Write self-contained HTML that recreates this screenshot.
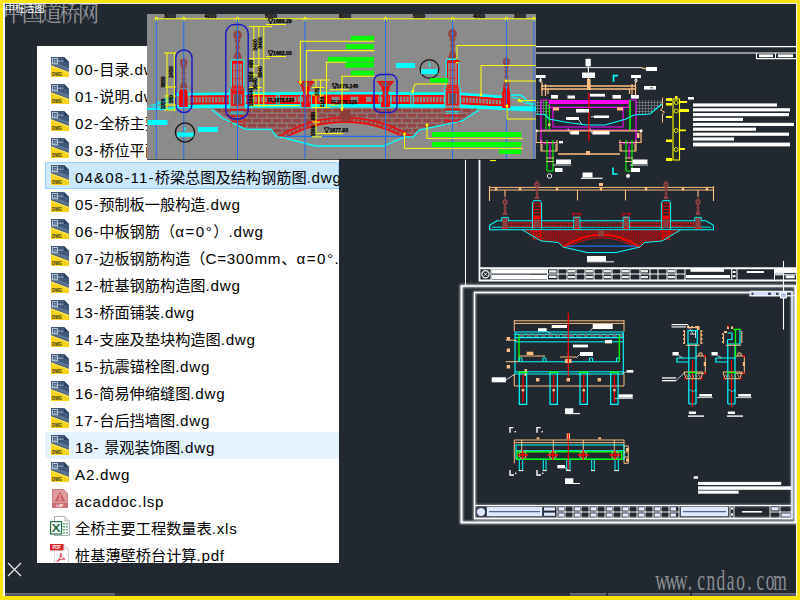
<!DOCTYPE html>
<html lang="zh-CN">
<head>
<meta charset="utf-8">
<title>桥梁总图 - 文件列表</title>
<style>
html,body{margin:0;padding:0;}
body{width:800px;height:600px;overflow:hidden;background:#212830;position:relative;
  font-family:"Liberation Sans","Noto Sans CJK SC",sans-serif;}
.abs{position:absolute;}
#frame{left:0;top:0;width:800px;height:600px;box-sizing:border-box;pointer-events:none;z-index:50;
  border-left:3px solid #f6e30f;border-top:3px solid #f6e30f;border-right:3px solid #f6e30f;border-bottom:4px solid #f6e30f;}
#frame2{left:3px;top:3px;width:794px;height:593px;box-sizing:border-box;pointer-events:none;z-index:49;border-left:2px solid #f4f4f4;border-top:1px solid #e8e8e8;border-right:1px solid #f4f4f4;}
#wm1{left:3px;top:-4px;font-family:"Liberation Serif","Noto Serif CJK SC",serif;font-size:21.5px;color:#93969a;letter-spacing:-2.8px;white-space:nowrap;z-index:5;}
#wm1b{left:5px;top:2.5px;font-size:10px;line-height:11px;color:#fff;white-space:nowrap;z-index:6;letter-spacing:-0.2px;}
#wm2{left:655px;top:565px;width:140px;height:30px;z-index:5;}
#files{left:37px;top:46px;width:302px;height:517px;background:#fff;overflow:hidden;z-index:10;}
.row{position:absolute;left:8px;width:294px;height:27px;box-sizing:border-box;white-space:nowrap;}
.row.sel{background:#cce8ff;border:1px solid #99d1ff;}
.row.hov{background:#e5f3ff;}
.row .ic{position:absolute;left:6px;top:3px;width:18px;height:20px;}
.row.sel .ic{left:5px;top:2px;}
.row .t{position:absolute;left:30px;top:0;height:27px;line-height:31px;font-size:15.2px;color:#000;}
.row .t .l{letter-spacing:0.75px;}
.row.sel .t{left:29px;top:-1px;}
#popup{left:147px;top:14px;width:389px;height:144.6px;background:#8b8b8b;z-index:20;overflow:hidden;box-shadow:0 0.8px 0 #15181c;}
#rt{left:440px;top:40px;width:360px;height:250px;z-index:3;}
#rb{left:440px;top:280px;width:360px;height:260px;z-index:4;overflow:visible;}
#xic{left:7px;top:562px;width:15px;height:15px;z-index:6;}
#strip{left:3px;top:592.8px;width:794px;height:3.6px;background:#2d323a;z-index:6;}
#strip i{position:absolute;top:0;height:100%;background:linear-gradient(#6c7076,#4a4f56);}
</style>
</head>
<body>
<div id="frame" class="abs"></div>
<div id="frame2" class="abs"></div>
<div id="wm1" class="abs">中国道桥网</div>
<div id="wm1b" class="abs">中桩活图</div>

<!-- FILES -->
<div id="files" class="abs">
<div class="row" style="top:8px"><svg class="ic" viewBox="0 0 18 20"><path d="M0 0H13L18 5V20H0Z" fill="#40597a"/><path d="M0 4L18 11V14L0 7Z" fill="#5b7595"/><path d="M13 0L18 5H13Z" fill="#2c4262"/><path d="M0 8.2L18 15V20H0Z" fill="#f6d31a"/><path d="M0 8.2L18 15V16.4L0 9.6Z" fill="#fbe25a"/><rect x="1.4" y="1.6" width="5.2" height="5.2" fill="none" stroke="#d5deea" stroke-width="0.8"/><rect x="3.2" y="3.4" width="2" height="2" fill="none" stroke="#aebcd0" stroke-width="0.6"/><path d="M6.6 4.2H12.4" stroke="#aebcd0" stroke-width="0.8"/><text x="1" y="18.6" font-family="Liberation Sans, sans-serif" font-weight="bold" font-size="5.6" fill="#33331a" textLength="10" lengthAdjust="spacingAndGlyphs">DWG</text></svg><span class="t"><span class="l">00-</span>目录<span class="l">.dwg</span></span></div>
<div class="row" style="top:35px"><svg class="ic" viewBox="0 0 18 20"><path d="M0 0H13L18 5V20H0Z" fill="#40597a"/><path d="M0 4L18 11V14L0 7Z" fill="#5b7595"/><path d="M13 0L18 5H13Z" fill="#2c4262"/><path d="M0 8.2L18 15V20H0Z" fill="#f6d31a"/><path d="M0 8.2L18 15V16.4L0 9.6Z" fill="#fbe25a"/><rect x="1.4" y="1.6" width="5.2" height="5.2" fill="none" stroke="#d5deea" stroke-width="0.8"/><rect x="3.2" y="3.4" width="2" height="2" fill="none" stroke="#aebcd0" stroke-width="0.6"/><path d="M6.6 4.2H12.4" stroke="#aebcd0" stroke-width="0.8"/><text x="1" y="18.6" font-family="Liberation Sans, sans-serif" font-weight="bold" font-size="5.6" fill="#33331a" textLength="10" lengthAdjust="spacingAndGlyphs">DWG</text></svg><span class="t"><span class="l">01-</span>说明<span class="l">.dwg</span></span></div>
<div class="row" style="top:62px"><svg class="ic" viewBox="0 0 18 20"><path d="M0 0H13L18 5V20H0Z" fill="#40597a"/><path d="M0 4L18 11V14L0 7Z" fill="#5b7595"/><path d="M13 0L18 5H13Z" fill="#2c4262"/><path d="M0 8.2L18 15V20H0Z" fill="#f6d31a"/><path d="M0 8.2L18 15V16.4L0 9.6Z" fill="#fbe25a"/><rect x="1.4" y="1.6" width="5.2" height="5.2" fill="none" stroke="#d5deea" stroke-width="0.8"/><rect x="3.2" y="3.4" width="2" height="2" fill="none" stroke="#aebcd0" stroke-width="0.6"/><path d="M6.6 4.2H12.4" stroke="#aebcd0" stroke-width="0.8"/><text x="1" y="18.6" font-family="Liberation Sans, sans-serif" font-weight="bold" font-size="5.6" fill="#33331a" textLength="10" lengthAdjust="spacingAndGlyphs">DWG</text></svg><span class="t"><span class="l">02-</span>全桥主要工程数量表<span class="l">.dwg</span></span></div>
<div class="row" style="top:89px"><svg class="ic" viewBox="0 0 18 20"><path d="M0 0H13L18 5V20H0Z" fill="#40597a"/><path d="M0 4L18 11V14L0 7Z" fill="#5b7595"/><path d="M13 0L18 5H13Z" fill="#2c4262"/><path d="M0 8.2L18 15V20H0Z" fill="#f6d31a"/><path d="M0 8.2L18 15V16.4L0 9.6Z" fill="#fbe25a"/><rect x="1.4" y="1.6" width="5.2" height="5.2" fill="none" stroke="#d5deea" stroke-width="0.8"/><rect x="3.2" y="3.4" width="2" height="2" fill="none" stroke="#aebcd0" stroke-width="0.6"/><path d="M6.6 4.2H12.4" stroke="#aebcd0" stroke-width="0.8"/><text x="1" y="18.6" font-family="Liberation Sans, sans-serif" font-weight="bold" font-size="5.6" fill="#33331a" textLength="10" lengthAdjust="spacingAndGlyphs">DWG</text></svg><span class="t"><span class="l">03-</span>桥位平面图<span class="l">.dwg</span></span></div>
<div class="row sel" style="top:116px"><svg class="ic" viewBox="0 0 18 20"><path d="M0 0H13L18 5V20H0Z" fill="#40597a"/><path d="M0 4L18 11V14L0 7Z" fill="#5b7595"/><path d="M13 0L18 5H13Z" fill="#2c4262"/><path d="M0 8.2L18 15V20H0Z" fill="#f6d31a"/><path d="M0 8.2L18 15V16.4L0 9.6Z" fill="#fbe25a"/><rect x="1.4" y="1.6" width="5.2" height="5.2" fill="none" stroke="#d5deea" stroke-width="0.8"/><rect x="3.2" y="3.4" width="2" height="2" fill="none" stroke="#aebcd0" stroke-width="0.6"/><path d="M6.6 4.2H12.4" stroke="#aebcd0" stroke-width="0.8"/><text x="1" y="18.6" font-family="Liberation Sans, sans-serif" font-weight="bold" font-size="5.6" fill="#33331a" textLength="10" lengthAdjust="spacingAndGlyphs">DWG</text></svg><span class="t"><span class="l" style="letter-spacing:1.1px">04&amp;08-11-</span>桥梁总图及结构钢筋图<span class="l">.dwg</span></span></div>
<div class="row" style="top:143px"><svg class="ic" viewBox="0 0 18 20"><path d="M0 0H13L18 5V20H0Z" fill="#40597a"/><path d="M0 4L18 11V14L0 7Z" fill="#5b7595"/><path d="M13 0L18 5H13Z" fill="#2c4262"/><path d="M0 8.2L18 15V20H0Z" fill="#f6d31a"/><path d="M0 8.2L18 15V16.4L0 9.6Z" fill="#fbe25a"/><rect x="1.4" y="1.6" width="5.2" height="5.2" fill="none" stroke="#d5deea" stroke-width="0.8"/><rect x="3.2" y="3.4" width="2" height="2" fill="none" stroke="#aebcd0" stroke-width="0.6"/><path d="M6.6 4.2H12.4" stroke="#aebcd0" stroke-width="0.8"/><text x="1" y="18.6" font-family="Liberation Sans, sans-serif" font-weight="bold" font-size="5.6" fill="#33331a" textLength="10" lengthAdjust="spacingAndGlyphs">DWG</text></svg><span class="t"><span class="l">05-</span>预制板一般构造<span class="l">.dwg</span></span></div>
<div class="row" style="top:170px"><svg class="ic" viewBox="0 0 18 20"><path d="M0 0H13L18 5V20H0Z" fill="#40597a"/><path d="M0 4L18 11V14L0 7Z" fill="#5b7595"/><path d="M13 0L18 5H13Z" fill="#2c4262"/><path d="M0 8.2L18 15V20H0Z" fill="#f6d31a"/><path d="M0 8.2L18 15V16.4L0 9.6Z" fill="#fbe25a"/><rect x="1.4" y="1.6" width="5.2" height="5.2" fill="none" stroke="#d5deea" stroke-width="0.8"/><rect x="3.2" y="3.4" width="2" height="2" fill="none" stroke="#aebcd0" stroke-width="0.6"/><path d="M6.6 4.2H12.4" stroke="#aebcd0" stroke-width="0.8"/><text x="1" y="18.6" font-family="Liberation Sans, sans-serif" font-weight="bold" font-size="5.6" fill="#33331a" textLength="10" lengthAdjust="spacingAndGlyphs">DWG</text></svg><span class="t"><span class="l">06-</span>中板钢筋（<span class="l" style="letter-spacing:1.5px">α=0°</span>）<span class="l">.dwg</span></span></div>
<div class="row" style="top:197px"><svg class="ic" viewBox="0 0 18 20"><path d="M0 0H13L18 5V20H0Z" fill="#40597a"/><path d="M0 4L18 11V14L0 7Z" fill="#5b7595"/><path d="M13 0L18 5H13Z" fill="#2c4262"/><path d="M0 8.2L18 15V20H0Z" fill="#f6d31a"/><path d="M0 8.2L18 15V16.4L0 9.6Z" fill="#fbe25a"/><rect x="1.4" y="1.6" width="5.2" height="5.2" fill="none" stroke="#d5deea" stroke-width="0.8"/><rect x="3.2" y="3.4" width="2" height="2" fill="none" stroke="#aebcd0" stroke-width="0.6"/><path d="M6.6 4.2H12.4" stroke="#aebcd0" stroke-width="0.8"/><text x="1" y="18.6" font-family="Liberation Sans, sans-serif" font-weight="bold" font-size="5.6" fill="#33331a" textLength="10" lengthAdjust="spacingAndGlyphs">DWG</text></svg><span class="t"><span class="l">07-</span>边板钢筋构造（<span class="l">C=300mm</span>、<span class="l" style="letter-spacing:1.5px">α=0°...</span></span></div>
<div class="row" style="top:224px"><svg class="ic" viewBox="0 0 18 20"><path d="M0 0H13L18 5V20H0Z" fill="#40597a"/><path d="M0 4L18 11V14L0 7Z" fill="#5b7595"/><path d="M13 0L18 5H13Z" fill="#2c4262"/><path d="M0 8.2L18 15V20H0Z" fill="#f6d31a"/><path d="M0 8.2L18 15V16.4L0 9.6Z" fill="#fbe25a"/><rect x="1.4" y="1.6" width="5.2" height="5.2" fill="none" stroke="#d5deea" stroke-width="0.8"/><rect x="3.2" y="3.4" width="2" height="2" fill="none" stroke="#aebcd0" stroke-width="0.6"/><path d="M6.6 4.2H12.4" stroke="#aebcd0" stroke-width="0.8"/><text x="1" y="18.6" font-family="Liberation Sans, sans-serif" font-weight="bold" font-size="5.6" fill="#33331a" textLength="10" lengthAdjust="spacingAndGlyphs">DWG</text></svg><span class="t"><span class="l">12-</span>桩基钢筋构造图<span class="l">.dwg</span></span></div>
<div class="row" style="top:251px"><svg class="ic" viewBox="0 0 18 20"><path d="M0 0H13L18 5V20H0Z" fill="#40597a"/><path d="M0 4L18 11V14L0 7Z" fill="#5b7595"/><path d="M13 0L18 5H13Z" fill="#2c4262"/><path d="M0 8.2L18 15V20H0Z" fill="#f6d31a"/><path d="M0 8.2L18 15V16.4L0 9.6Z" fill="#fbe25a"/><rect x="1.4" y="1.6" width="5.2" height="5.2" fill="none" stroke="#d5deea" stroke-width="0.8"/><rect x="3.2" y="3.4" width="2" height="2" fill="none" stroke="#aebcd0" stroke-width="0.6"/><path d="M6.6 4.2H12.4" stroke="#aebcd0" stroke-width="0.8"/><text x="1" y="18.6" font-family="Liberation Sans, sans-serif" font-weight="bold" font-size="5.6" fill="#33331a" textLength="10" lengthAdjust="spacingAndGlyphs">DWG</text></svg><span class="t"><span class="l">13-</span>桥面铺装<span class="l">.dwg</span></span></div>
<div class="row" style="top:278px"><svg class="ic" viewBox="0 0 18 20"><path d="M0 0H13L18 5V20H0Z" fill="#40597a"/><path d="M0 4L18 11V14L0 7Z" fill="#5b7595"/><path d="M13 0L18 5H13Z" fill="#2c4262"/><path d="M0 8.2L18 15V20H0Z" fill="#f6d31a"/><path d="M0 8.2L18 15V16.4L0 9.6Z" fill="#fbe25a"/><rect x="1.4" y="1.6" width="5.2" height="5.2" fill="none" stroke="#d5deea" stroke-width="0.8"/><rect x="3.2" y="3.4" width="2" height="2" fill="none" stroke="#aebcd0" stroke-width="0.6"/><path d="M6.6 4.2H12.4" stroke="#aebcd0" stroke-width="0.8"/><text x="1" y="18.6" font-family="Liberation Sans, sans-serif" font-weight="bold" font-size="5.6" fill="#33331a" textLength="10" lengthAdjust="spacingAndGlyphs">DWG</text></svg><span class="t"><span class="l">14-</span>支座及垫块构造图<span class="l">.dwg</span></span></div>
<div class="row" style="top:305px"><svg class="ic" viewBox="0 0 18 20"><path d="M0 0H13L18 5V20H0Z" fill="#40597a"/><path d="M0 4L18 11V14L0 7Z" fill="#5b7595"/><path d="M13 0L18 5H13Z" fill="#2c4262"/><path d="M0 8.2L18 15V20H0Z" fill="#f6d31a"/><path d="M0 8.2L18 15V16.4L0 9.6Z" fill="#fbe25a"/><rect x="1.4" y="1.6" width="5.2" height="5.2" fill="none" stroke="#d5deea" stroke-width="0.8"/><rect x="3.2" y="3.4" width="2" height="2" fill="none" stroke="#aebcd0" stroke-width="0.6"/><path d="M6.6 4.2H12.4" stroke="#aebcd0" stroke-width="0.8"/><text x="1" y="18.6" font-family="Liberation Sans, sans-serif" font-weight="bold" font-size="5.6" fill="#33331a" textLength="10" lengthAdjust="spacingAndGlyphs">DWG</text></svg><span class="t"><span class="l">15-</span>抗震锚栓图<span class="l">.dwg</span></span></div>
<div class="row" style="top:332px"><svg class="ic" viewBox="0 0 18 20"><path d="M0 0H13L18 5V20H0Z" fill="#40597a"/><path d="M0 4L18 11V14L0 7Z" fill="#5b7595"/><path d="M13 0L18 5H13Z" fill="#2c4262"/><path d="M0 8.2L18 15V20H0Z" fill="#f6d31a"/><path d="M0 8.2L18 15V16.4L0 9.6Z" fill="#fbe25a"/><rect x="1.4" y="1.6" width="5.2" height="5.2" fill="none" stroke="#d5deea" stroke-width="0.8"/><rect x="3.2" y="3.4" width="2" height="2" fill="none" stroke="#aebcd0" stroke-width="0.6"/><path d="M6.6 4.2H12.4" stroke="#aebcd0" stroke-width="0.8"/><text x="1" y="18.6" font-family="Liberation Sans, sans-serif" font-weight="bold" font-size="5.6" fill="#33331a" textLength="10" lengthAdjust="spacingAndGlyphs">DWG</text></svg><span class="t"><span class="l">16-</span>简易伸缩缝图<span class="l">.dwg</span></span></div>
<div class="row" style="top:359px"><svg class="ic" viewBox="0 0 18 20"><path d="M0 0H13L18 5V20H0Z" fill="#40597a"/><path d="M0 4L18 11V14L0 7Z" fill="#5b7595"/><path d="M13 0L18 5H13Z" fill="#2c4262"/><path d="M0 8.2L18 15V20H0Z" fill="#f6d31a"/><path d="M0 8.2L18 15V16.4L0 9.6Z" fill="#fbe25a"/><rect x="1.4" y="1.6" width="5.2" height="5.2" fill="none" stroke="#d5deea" stroke-width="0.8"/><rect x="3.2" y="3.4" width="2" height="2" fill="none" stroke="#aebcd0" stroke-width="0.6"/><path d="M6.6 4.2H12.4" stroke="#aebcd0" stroke-width="0.8"/><text x="1" y="18.6" font-family="Liberation Sans, sans-serif" font-weight="bold" font-size="5.6" fill="#33331a" textLength="10" lengthAdjust="spacingAndGlyphs">DWG</text></svg><span class="t"><span class="l">17-</span>台后挡墙图<span class="l">.dwg</span></span></div>
<div class="row hov" style="top:386px"><svg class="ic" viewBox="0 0 18 20"><path d="M0 0H13L18 5V20H0Z" fill="#40597a"/><path d="M0 4L18 11V14L0 7Z" fill="#5b7595"/><path d="M13 0L18 5H13Z" fill="#2c4262"/><path d="M0 8.2L18 15V20H0Z" fill="#f6d31a"/><path d="M0 8.2L18 15V16.4L0 9.6Z" fill="#fbe25a"/><rect x="1.4" y="1.6" width="5.2" height="5.2" fill="none" stroke="#d5deea" stroke-width="0.8"/><rect x="3.2" y="3.4" width="2" height="2" fill="none" stroke="#aebcd0" stroke-width="0.6"/><path d="M6.6 4.2H12.4" stroke="#aebcd0" stroke-width="0.8"/><text x="1" y="18.6" font-family="Liberation Sans, sans-serif" font-weight="bold" font-size="5.6" fill="#33331a" textLength="10" lengthAdjust="spacingAndGlyphs">DWG</text></svg><span class="t"><span class="l">18- </span>景观装饰图<span class="l">.dwg</span></span></div>
<div class="row" style="top:413px"><svg class="ic" viewBox="0 0 18 20"><path d="M0 0H13L18 5V20H0Z" fill="#40597a"/><path d="M0 4L18 11V14L0 7Z" fill="#5b7595"/><path d="M13 0L18 5H13Z" fill="#2c4262"/><path d="M0 8.2L18 15V20H0Z" fill="#f6d31a"/><path d="M0 8.2L18 15V16.4L0 9.6Z" fill="#fbe25a"/><rect x="1.4" y="1.6" width="5.2" height="5.2" fill="none" stroke="#d5deea" stroke-width="0.8"/><rect x="3.2" y="3.4" width="2" height="2" fill="none" stroke="#aebcd0" stroke-width="0.6"/><path d="M6.6 4.2H12.4" stroke="#aebcd0" stroke-width="0.8"/><text x="1" y="18.6" font-family="Liberation Sans, sans-serif" font-weight="bold" font-size="5.6" fill="#33331a" textLength="10" lengthAdjust="spacingAndGlyphs">DWG</text></svg><span class="t"><span class="l">A2.dwg</span></span></div>
<div class="row" style="top:440px"><svg class="ic" viewBox="0 0 18 20" style="left:7px;top:3px"><path d="M0.5 0.5H11.5L15.5 4.5V18.5H0.5Z" fill="#dc9c9e" stroke="#cf7e82" stroke-width="1"/><path d="M0.5 14H15.5V18.5H0.5Z" fill="#cc6d72"/><path d="M8 2.6L2.8 12.6H13.2Z" fill="#c9595e"/><path d="M8 5V12.6" stroke="#ecc4c6" stroke-width="0.9"/><path d="M5 12.6L8 8L11 12.6" fill="none" stroke="#e2a6a9" stroke-width="0.7"/><text x="4.6" y="18" font-family="Liberation Sans, sans-serif" font-weight="bold" font-size="4.2" fill="#fff" textLength="6.8" lengthAdjust="spacingAndGlyphs">LSP</text></svg><span class="t"><span class="l">acaddoc.lsp</span></span></div>
<div class="row" style="top:467px"><svg class="ic" viewBox="0 0 20 20" style="left:5px;top:3px;width:20px;height:20px"><path d="M4.5 0.5H15L19.5 5V19.5H4.5Z" fill="#fff" stroke="#a9adb3" stroke-width="1"/><path d="M15 0.5V5H19.5" fill="#e8e8e8" stroke="#a9adb3" stroke-width="0.8"/><g fill="#6faf86"><rect x="13" y="7" width="2" height="1.6"/><rect x="16" y="7" width="2" height="1.6"/><rect x="13" y="10" width="2" height="1.6"/><rect x="16" y="10" width="2" height="1.6"/><rect x="13" y="13" width="2" height="1.6"/><rect x="16" y="13" width="2" height="1.6"/><rect x="13" y="16" width="2" height="1.6"/><rect x="16" y="16" width="2" height="1.6"/></g><rect x="0.6" y="5.6" width="11" height="12.4" fill="#fff" stroke="#1e7145" stroke-width="1.2"/><text x="1.6" y="15.6" font-family="Liberation Sans, sans-serif" font-weight="bold" font-size="10.5" fill="#1e7145" textLength="9" lengthAdjust="spacingAndGlyphs">X</text></svg><span class="t">全桥主要工程数量表<span class="l">.xls</span></span></div>
<div class="row" style="top:494px"><svg class="ic" viewBox="0 0 19 20" style="left:5px;top:4px;width:19px;height:20px"><path d="M4.5 0.5H14L18.5 5V19.5H4.5Z" fill="#fdfdfd" stroke="#cfd2d6" stroke-width="1"/><path d="M14 0.5V5H18.5" fill="#e9e9e9" stroke="#cfd2d6" stroke-width="0.8"/><rect x="0" y="0" width="13.5" height="6.4" fill="#d9212a"/><text x="2.4" y="5.2" font-family="Liberation Sans, sans-serif" font-weight="bold" font-size="5" fill="#fff" textLength="8.6" lengthAdjust="spacingAndGlyphs">PDF</text><path d="M10.6 9.2C11.5 9 11.5 10.6 11 12C11.8 13.6 13 14.3 14.3 14.5C15.2 14.6 15 15.6 13.8 15.3C12.2 15 10.6 15.3 9 16.1C8.2 17.4 7.4 17.9 7 17.4C6.7 16.8 7.8 16.1 8.8 15.8C9.8 14.3 10.4 13 10.7 11.9C10.3 10.8 10.1 9.4 10.6 9.2Z" fill="none" stroke="#d9212a" stroke-width="0.9"/></svg><span class="t">桩基薄壁桥台计算<span class="l">.pdf</span></span></div>
</div>

<!-- POPUP -->
<div id="popup" class="abs">
<svg class="abs" style="left:0;top:0" width="389" height="145" viewBox="147 14 389 145">
<line x1="156" y1="18.8" x2="534" y2="18.8" stroke="#ffff00" stroke-width="1"/>
<path d="M154.3 18.8L156.3 16.5L158.3 18.8L156.3 22Z" fill="#ffff00"/>
<path d="M181.8 18.8L183.8 16.5L185.8 18.8L183.8 22Z" fill="#ffff00"/>
<path d="M235.5 18.8L237.5 16.5L239.5 18.8L237.5 22Z" fill="#ffff00"/>
<path d="M303 18.8L305 16.5L307 18.8L305 22Z" fill="#ffff00"/>
<path d="M383.5 18.8L385.5 16.5L387.5 18.8L385.5 22Z" fill="#ffff00"/>
<path d="M450.5 18.8L452.5 16.5L454.5 18.8L452.5 22Z" fill="#ffff00"/>
<path d="M504.4 18.8L506.4 16.5L508.4 18.8L506.4 22Z" fill="#ffff00"/>
<path d="M532 18.8L534 16.5L536 18.8L534 22Z" fill="#ffff00"/>
<text x="170" y="17.6" font-family="Liberation Sans, sans-serif" font-weight="bold" font-size="5.4" text-anchor="middle" fill="#000" stroke="#000" stroke-width="0.25">3000</text>
<text x="210.5" y="17.6" font-family="Liberation Sans, sans-serif" font-weight="bold" font-size="5.4" text-anchor="middle" fill="#000" stroke="#000" stroke-width="0.25">4000</text>
<text x="271" y="17.6" font-family="Liberation Sans, sans-serif" font-weight="bold" font-size="5.4" text-anchor="middle" fill="#000" stroke="#000" stroke-width="0.25">5000</text>
<text x="345" y="17.6" font-family="Liberation Sans, sans-serif" font-weight="bold" font-size="5.4" text-anchor="middle" fill="#000" stroke="#000" stroke-width="0.25">8000</text>
<text x="419" y="17.6" font-family="Liberation Sans, sans-serif" font-weight="bold" font-size="5.4" text-anchor="middle" fill="#000" stroke="#000" stroke-width="0.25">5000</text>
<text x="479" y="17.6" font-family="Liberation Sans, sans-serif" font-weight="bold" font-size="5.4" text-anchor="middle" fill="#000" stroke="#000" stroke-width="0.25">4000</text>
<text x="520" y="17.6" font-family="Liberation Sans, sans-serif" font-weight="bold" font-size="5.4" text-anchor="middle" fill="#000" stroke="#000" stroke-width="0.25">3000</text>
<path d="M176.0 92.9L188.0 92.8L200.0 92.7L212.0 92.6L224.0 92.5L236.0 92.4L248.0 92.3L260.0 92.2L272.0 92.2L284.0 92.1L296.0 92.1L308.0 92.0L320.0 92.0L332.0 92.0L344.0 92.0L356.0 92.0L368.0 92.0L380.0 92.0L392.0 92.1L404.0 92.1L416.0 92.2L428.0 92.2L440.0 92.3L452.0 92.4L464.0 92.7L476.0 93.7L488.0 94.6L500.0 95.5L511.0 96.4L511.0 99.2L500.0 98.3L488.0 97.4L476.0 96.5L464.0 95.5L452.0 95.2L440.0 95.1L428.0 95.0L416.0 95.0L404.0 94.9L392.0 94.9L380.0 94.8L368.0 94.8L356.0 94.8L344.0 94.8L332.0 94.8L320.0 94.8L308.0 94.8L296.0 94.9L284.0 94.9L272.0 95.0L260.0 95.0L248.0 95.1L236.0 95.2L224.0 95.3L212.0 95.4L200.0 95.5L188.0 95.6L176.0 95.7Z" fill="#00ffff"/>
<path d="M190.0 95.6L202.0 95.4L214.0 95.3L226.0 95.2L238.0 95.2L250.0 95.1L262.0 95.0L274.0 95.0L286.0 94.9L298.0 94.9L310.0 94.8L322.0 94.8L334.0 94.8L346.0 94.8L358.0 94.8L370.0 94.8L382.0 94.8L394.0 94.9L406.0 94.9L418.0 95.0L430.0 95.0L442.0 95.1L454.0 95.2L466.0 95.7L478.0 96.6L490.0 97.5L502.0 98.5L510.0 99.1L510.0 100.8L502.0 100.2L490.0 99.2L478.0 98.3L466.0 97.4L454.0 96.9L442.0 96.8L430.0 96.7L418.0 96.7L406.0 96.6L394.0 96.6L382.0 96.5L370.0 96.5L358.0 96.5L346.0 96.5L334.0 96.5L322.0 96.5L310.0 96.5L298.0 96.6L286.0 96.6L274.0 96.7L262.0 96.7L250.0 96.8L238.0 96.9L226.0 96.9L214.0 97.0L202.0 97.1L190.0 97.3Z" fill="#ff0000"/>
<path d="M190.0 102.8L202.0 102.6L214.0 102.5L226.0 102.4L238.0 102.4L250.0 102.3L262.0 102.2L274.0 102.2L286.0 102.1L298.0 102.1L310.0 102.0L322.0 102.0L334.0 102.0L346.0 102.0L358.0 102.0L370.0 102.0L382.0 102.0L394.0 102.1L406.0 102.1L418.0 102.2L430.0 102.2L442.0 102.3L454.0 102.4L466.0 102.7L478.0 103.3L490.0 103.9L502.0 104.5L510.0 104.9L510.0 106.9L502.0 106.5L490.0 105.9L478.0 105.3L466.0 104.7L454.0 104.4L442.0 104.3L430.0 104.2L418.0 104.2L406.0 104.1L394.0 104.1L382.0 104.0L370.0 104.0L358.0 104.0L346.0 104.0L334.0 104.0L322.0 104.0L310.0 104.0L298.0 104.1L286.0 104.1L274.0 104.2L262.0 104.2L250.0 104.3L238.0 104.4L226.0 104.4L214.0 104.5L202.0 104.6L190.0 104.8Z" fill="#ff0000"/>
<path d="M191.5 96.7V103.2 M194.8 96.7V103.2 M198.1 96.7V103.2 M201.4 96.6V103.1 M204.7 96.6V103.1 M208.0 96.6V103.1 M211.3 96.6V103.1 M214.6 96.5V103.0 M217.9 96.5V103.0 M221.2 96.5V103.0 M224.5 96.5V103.0 M227.8 96.4V102.9 M231.1 96.4V102.9 M234.4 96.4V102.9 M237.7 96.4V102.9 M241.0 96.3V102.8 M244.3 96.3V102.8 M247.6 96.3V102.8 M250.9 96.3V102.8 M254.2 96.3V102.8 M257.5 96.2V102.7 M260.8 96.2V102.7 M264.1 96.2V102.7 M267.4 96.2V102.7 M270.7 96.2V102.7 M274.0 96.2V102.7 M277.3 96.1V102.6 M280.6 96.1V102.6 M283.9 96.1V102.6 M287.2 96.1V102.6 M290.5 96.1V102.6 M293.8 96.1V102.6 M297.1 96.1V102.6 M300.4 96.1V102.6 M303.7 96.1V102.6 M307.0 96.0V102.5 M310.3 96.0V102.5 M313.6 96.0V102.5 M316.9 96.0V102.5 M320.2 96.0V102.5 M323.5 96.0V102.5 M326.8 96.0V102.5 M330.1 96.0V102.5 M333.4 96.0V102.5 M336.7 96.0V102.5 M340.0 96.0V102.5 M343.3 96.0V102.5 M346.6 96.0V102.5 M349.9 96.0V102.5 M353.2 96.0V102.5 M356.5 96.0V102.5 M359.8 96.0V102.5 M363.1 96.0V102.5 M366.4 96.0V102.5 M369.7 96.0V102.5 M373.0 96.0V102.5 M376.3 96.0V102.5 M379.6 96.0V102.5 M382.9 96.0V102.5 M386.2 96.1V102.6 M389.5 96.1V102.6 M392.8 96.1V102.6 M396.1 96.1V102.6 M399.4 96.1V102.6 M402.7 96.1V102.6 M406.0 96.1V102.6 M409.3 96.1V102.6 M412.6 96.1V102.6 M415.9 96.2V102.7 M419.2 96.2V102.7 M422.5 96.2V102.7 M425.8 96.2V102.7 M429.1 96.2V102.7 M432.4 96.2V102.7 M435.7 96.3V102.8 M439.0 96.3V102.8 M442.3 96.3V102.8 M445.6 96.3V102.8 M448.9 96.3V102.8 M452.2 96.4V102.9 M455.5 96.4V102.9 M458.8 96.4V102.9 M462.1 96.6V103.0 M465.4 96.8V103.2 M468.7 97.1V103.3 M472.0 97.3V103.5 M475.3 97.6V103.7 M478.6 97.9V103.8 M481.9 98.1V104.0 M485.2 98.4V104.1 M488.5 98.6V104.3 M491.8 98.9V104.5 M495.1 99.1V104.6 M498.4 99.4V104.8 M501.7 99.7V105.0 M505.0 99.9V105.1 M508.3 100.2V105.3" stroke="#ff0000" stroke-width="1.05" fill="none"/>
<rect x="276.4" y="93.7" width="3.2" height="10.4" fill="#00ffff"/><rect x="277.4" y="95.1" width="1.2" height="9.0" fill="#ff0000"/>
<rect x="410.4" y="93.7" width="3.2" height="10.4" fill="#00ffff"/><rect x="411.4" y="95.1" width="1.2" height="9.0" fill="#ff0000"/>
<path d="M176.0 104.9L188.0 104.8L200.0 104.7L212.0 104.6L224.0 104.5L236.0 104.4L248.0 104.3L260.0 104.2L272.0 104.2L284.0 104.1L296.0 104.1L308.0 104.0L320.0 104.0L332.0 104.0L344.0 104.0L356.0 104.0L368.0 104.0L380.0 104.0L392.0 104.1L404.0 104.1L416.0 104.2L428.0 104.2L440.0 104.3L452.0 104.4L464.0 104.6L476.0 105.2L488.0 105.8L500.0 106.4L512.0 107.0L524.0 107.5L536.0 108.1L536.0 111.6L524.0 111.0L512.0 110.5L500.0 109.9L488.0 109.3L476.0 108.7L464.0 108.1L452.0 107.9L440.0 107.8L428.0 107.7L416.0 107.7L404.0 107.6L392.0 107.6L380.0 107.5L368.0 107.5L356.0 107.5L344.0 107.5L332.0 107.5L320.0 107.5L308.0 107.5L296.0 107.6L284.0 107.6L272.0 107.7L260.0 107.7L248.0 107.8L236.0 107.9L224.0 108.0L212.0 108.1L200.0 108.2L188.0 108.3L176.0 108.4Z" fill="#00ffff"/>
<path d="M147 108.8H168L178 107" fill="none" stroke="#00ffff" stroke-width="2.4"/>
<path d="M150 105.5Q164 104 170 98T179 93.6" fill="none" stroke="#00ffff" stroke-width="1.2"/>
<path d="M153 107Q167 106 172.5 100T179 95.6" fill="none" stroke="#00ffff" stroke-width="1"/>
<path d="M156 103Q164 101.4 168 96.4" fill="none" stroke="#00ffff" stroke-width="0.9"/>
<path d="M510.6 95H519Q523.5 95.6 526 100T535 103.6" fill="none" stroke="#00ffff" stroke-width="1.4"/>
<path d="M512 97.6L518 98Q521 101.6 527 103.8L535 104.6" fill="none" stroke="#00ffff" stroke-width="1"/>
<path d="M497 107.8H536" fill="none" stroke="#00ffff" stroke-width="3.2"/>
<path d="M519 101l3 -1.7v3.4z" fill="#ffff00"/>
<defs><pattern id="brk" x="212" y="108" width="10" height="10" patternUnits="userSpaceOnUse"><rect x="0.5" y="0.6" width="9" height="4" fill="#964545"/><rect x="-4.5" y="5.6" width="9" height="4" fill="#964545"/><rect x="5.5" y="5.6" width="9" height="4" fill="#964545"/></pattern>
<clipPath id="wallc"><path d="M213 108.4L478 108.4L462 121L420 130L413 137L410 137A124 124 0 0 0 280 137L277 137L271 129.5L246 130Z"/></clipPath></defs>
<rect x="210" y="108" width="270" height="30" fill="url(#brk)" clip-path="url(#wallc)"/>
<path d="M282.5 137A122.5 122.5 0 0 1 407.5 137" fill="none" stroke="#a84040" stroke-width="4.4" stroke-dasharray="3.4 1"/>
<path d="M278 137A125.4 125.4 0 0 1 412 137" fill="none" stroke="#ff0000" stroke-width="1.4"/>
<path d="M287 137A119.6 119.6 0 0 1 403 137" fill="none" stroke="#ff0000" stroke-width="1.3"/>
<rect x="340.4" y="110" width="9.8" height="11.4" fill="#8e3c3c"/>
<path d="M212 109.5L222 118L246 129.4L271 129.4L277 137L285 138L315 146H383L405 137H413L419 130L462 121L479 110" fill="none" stroke="#00ffff" stroke-width="1.3"/>
<line x1="286" y1="136.4" x2="404" y2="136.4" stroke="#1c6ef2" stroke-width="1.2"/>
<path d="M183.6 57.0V59.4" stroke="#964242" stroke-width="1.2"/>
<ellipse cx="183.6" cy="62.63" rx="3.7049999999999996" ry="3.8949999999999996" fill="#964242"/>
<circle cx="183.6" cy="62.63" r="1.14" fill="#3c8cf0"/>
<path d="M180.75 66.62H186.45L184.835 69.85H182.36499999999998Z" fill="#964242"/>
<path d="M183.6 66.5V88" stroke="#964242" stroke-width="2.4699999999999998"/>
<path d="M183.6 71.75V74.125M183.6 77.45V79.35" stroke="#964242" stroke-width="3.9899999999999998"/>
<path d="M181.51 82L185.69 82L187.4 88H179.79999999999998Z" fill="#964242"/>
<path d="M179 107V91L181 88.4L183.3 91L185.6 88.4L187.6 91V107Z" fill="#ff0000"/>
<path d="M183.3 92V106" stroke="#a85a5a" stroke-width="0.8"/>
<path d="M178.2 92L179.4 89.6M188.4 92L187.2 89.6" stroke="#00ffff" stroke-width="0.9" fill="none"/>
<path d="M506.4 56.3V58.599999999999994" stroke="#964242" stroke-width="1.2"/>
<ellipse cx="506.4" cy="61.66" rx="3.51" ry="3.69" fill="#964242"/>
<circle cx="506.4" cy="61.66" r="1.08" fill="#3c8cf0"/>
<path d="M503.7 65.44H509.09999999999997L507.57 68.5H505.22999999999996Z" fill="#964242"/>
<path d="M506.4 65.8V86.5" stroke="#964242" stroke-width="2.3400000000000003"/>
<path d="M506.4 70.3V72.55M506.4 75.7V77.5" stroke="#964242" stroke-width="3.7800000000000002"/>
<path d="M504.41999999999996 80.5L508.38 80.5L510.0 86.5H502.79999999999995Z" fill="#964242"/>
<path d="M502.2 108V90L504 86L506.2 90L508.4 86L510.2 90V108Z" fill="#ff0000"/>
<path d="M504.6 92V106" stroke="#a85a5a" stroke-width="0.7"/>
<path d="M501.2 92L502.6 88.6M511.2 92L509.8 88.6" stroke="#00ffff" stroke-width="0.9" fill="none"/>
<path d="M237.5 28.5V31.240000000000002" stroke="#964242" stroke-width="1.2"/>
<ellipse cx="237.5" cy="35.048" rx="4.368" ry="4.592" fill="#964242"/>
<circle cx="237.5" cy="35.048" r="1.344" fill="#3c8cf0"/>
<path d="M234.14 39.752H240.86L238.956 43.56H236.044Z" fill="#964242"/>
<path d="M237.5 38V58.6" stroke="#964242" stroke-width="2.9120000000000004"/>
<path d="M237.5 45.8V48.6M237.5 52.52V54.760000000000005" stroke="#964242" stroke-width="4.704000000000001"/>
<path d="M235.036 52.6L239.964 52.6L241.98 58.6H233.02Z" fill="#964242"/>
<path d="M230.5 63.1L232.1 60.0H242.9L244.5 63.1" fill="none" stroke="#00ffff" stroke-width="1.2"/>
<path d="M231.1 63.1V86.6L229.7 88.6V108.6M243.9 63.1V86.6L245.3 88.6V108.6" fill="none" stroke="#00ffff" stroke-width="1"/>
<rect x="231.9" y="60.8" width="11.2" height="2.2" fill="#ff0000"/>
<rect x="232.5" y="63.2" width="10" height="23" fill="none" stroke="#ff0000" stroke-width="1.0"/>
<path d="M232.5 70.6H242.5M232.5 78.6H242.5M235.7 63.2V86.2M239.3 63.2V86.2" stroke="#ff0000" stroke-width="0.6" fill="none"/>
<rect x="230.1" y="87.0" width="14.8" height="21.4" fill="#8b8b8b"/>
<path d="M231.5 87.8H243.5M230.7 89.8H244.3M231.1 91.6H243.9" stroke="#ff0000" stroke-width="1.2" fill="none"/>
<rect x="232.1" y="93.0" width="10.8" height="12" fill="none" stroke="#ff0000" stroke-width="1.6"/>
<rect x="234.1" y="94.0" width="6.8" height="10.6" fill="#7a4a4a"/>
<path d="M230.5 109.8H244.5" stroke="#ff0000" stroke-width="1.6" fill="none"/>
<path d="M231.5 116.2H243.5M231.5 121.6H243.5" stroke="#ff0000" stroke-width="1.4" fill="none" stroke-dasharray="3 1"/>
<path d="M230.9 109.6V126.6M244.1 109.6V126.6" stroke="#ff0000" stroke-width="0.9" fill="none" stroke-dasharray="2 1.2"/>
<path d="M229.9 112.0H245.1M229.9 113.8H245.1" stroke="#00ffff" stroke-width="0.8" fill="none"/>
<path d="M452.5 27.1V29.840000000000003" stroke="#964242" stroke-width="1.2"/>
<ellipse cx="452.5" cy="33.648" rx="4.368" ry="4.592" fill="#964242"/>
<circle cx="452.5" cy="33.648" r="1.344" fill="#3c8cf0"/>
<path d="M449.14 38.352000000000004H455.86L453.956 42.160000000000004H451.044Z" fill="#964242"/>
<path d="M452.5 36.6V58" stroke="#964242" stroke-width="2.9120000000000004"/>
<path d="M452.5 44.400000000000006V47.2M452.5 51.120000000000005V53.36" stroke="#964242" stroke-width="4.704000000000001"/>
<path d="M450.036 52L454.964 52L456.98 58H448.02Z" fill="#964242"/>
<path d="M445.5 62.5L447.1 59.4H457.9L459.5 62.5" fill="none" stroke="#00ffff" stroke-width="1.2"/>
<path d="M446.1 62.5V86L444.7 88V108M458.9 62.5V86L460.3 88V108" fill="none" stroke="#00ffff" stroke-width="1"/>
<rect x="446.9" y="60.2" width="11.2" height="2.2" fill="#ff0000"/>
<rect x="447.5" y="62.6" width="10" height="23" fill="none" stroke="#ff0000" stroke-width="1.0"/>
<path d="M447.5 70H457.5M447.5 78H457.5M450.7 62.6V85.6M454.3 62.6V85.6" stroke="#ff0000" stroke-width="0.6" fill="none"/>
<rect x="445.1" y="86.4" width="14.8" height="21.4" fill="#8b8b8b"/>
<path d="M446.5 87.2H458.5M445.7 89.2H459.3M446.1 91H458.9" stroke="#ff0000" stroke-width="1.2" fill="none"/>
<rect x="447.1" y="92.4" width="10.8" height="12" fill="none" stroke="#ff0000" stroke-width="1.6"/>
<rect x="449.1" y="93.4" width="6.8" height="10.6" fill="#7a4a4a"/>
<path d="M445.5 109.2H459.5" stroke="#ff0000" stroke-width="1.6" fill="none"/>
<path d="M446.5 115.6H458.5M446.5 121H458.5" stroke="#ff0000" stroke-width="1.4" fill="none" stroke-dasharray="3 1"/>
<path d="M445.9 109V126M459.1 109V126" stroke="#ff0000" stroke-width="0.9" fill="none" stroke-dasharray="2 1.2"/>
<path d="M444.9 111.4H460.1M444.9 113.2H460.1" stroke="#00ffff" stroke-width="0.8" fill="none"/>
<rect x="312" y="94.8" width="66" height="9.2" fill="#ff0000"/>
<rect x="318.5" y="96.8" width="5.5" height="5.2" fill="#8b8b8b"/>
<rect x="331.5" y="96.8" width="8.0" height="5.2" fill="#8b8b8b"/>
<rect x="350.5" y="96.8" width="8.0" height="5.2" fill="#8b8b8b"/>
<rect x="366" y="96.8" width="5.5" height="5.2" fill="#8b8b8b"/>
<path d="M298.6 81.6H313.4L309 87.6H303Z" fill="#9a4040" stroke="#ff0000" stroke-width="1.3"/>
<rect x="302.2" y="87.6" width="7.6" height="3" fill="#ff0000"/>
<rect x="303.2" y="90" width="5.6" height="16.5" fill="#ff0000"/>
<path d="M305.1 91V105M306.9 91V105" stroke="#9a5a5a" stroke-width="0.7"/>
<rect x="301.4" y="104" width="9.2" height="3" fill="#ff0000"/>
<path d="M300.6 92.5V108M311.4 92.5V108" stroke="#00ffff" stroke-width="0.9"/>
<path d="M378.1 81.6H392.9L388.5 87.6H382.5Z" fill="#9a4040" stroke="#ff0000" stroke-width="1.3"/>
<rect x="381.7" y="87.6" width="7.6" height="3" fill="#ff0000"/>
<rect x="382.7" y="90" width="5.6" height="16.5" fill="#ff0000"/>
<path d="M384.6 91V105M386.4 91V105" stroke="#9a5a5a" stroke-width="0.7"/>
<rect x="380.9" y="104" width="9.2" height="3" fill="#ff0000"/>
<path d="M380.1 92.5V108M390.9 92.5V108" stroke="#00ffff" stroke-width="0.9"/>
<line x1="156.3" y1="19" x2="156.3" y2="159" stroke="#1c6ef2" stroke-width="1"/>
<line x1="183.8" y1="19" x2="183.8" y2="159" stroke="#1c6ef2" stroke-width="1"/>
<line x1="237.5" y1="19" x2="237.5" y2="159" stroke="#1c6ef2" stroke-width="1"/>
<line x1="305" y1="19" x2="305" y2="159" stroke="#1c6ef2" stroke-width="1"/>
<line x1="385.5" y1="19" x2="385.5" y2="159" stroke="#1c6ef2" stroke-width="1"/>
<line x1="452.5" y1="19" x2="452.5" y2="159" stroke="#1c6ef2" stroke-width="1"/>
<line x1="506.4" y1="19" x2="506.4" y2="159" stroke="#1c6ef2" stroke-width="1"/>
<line x1="534" y1="19" x2="534" y2="159" stroke="#1c6ef2" stroke-width="1"/>
<rect x="175.8" y="50" width="16.2" height="62.5" rx="8" fill="none" stroke="#1616c8" stroke-width="1.4"/>
<rect x="225.8" y="24.5" width="22.4" height="94.5" rx="9" fill="none" stroke="#1616c8" stroke-width="1.4"/>
<rect x="374" y="74.5" width="23" height="38" rx="6.5" fill="none" stroke="#1616c8" stroke-width="1.4"/>
<rect x="147.5" y="120" width="20" height="5" fill="#00ffff"/>
<rect x="198" y="127" width="20" height="5" fill="#00ffff"/>
<circle cx="185" cy="132.5" r="9.6" fill="none" stroke="#111" stroke-width="1.3"/>
<rect x="177" y="132.5" width="16.5" height="4.2" fill="#00ffff"/>
<path d="M185 127V131" stroke="#00ffff" stroke-width="1.2"/>
<path d="M167.5 125L178 112M218 132L226 120" stroke="#777" stroke-width="0.6"/>
<rect x="396" y="63" width="19" height="5" fill="#00ffff"/>
<circle cx="429.5" cy="69" r="9.4" fill="none" stroke="#111" stroke-width="1.3"/>
<rect x="421" y="69" width="16.5" height="5.2" fill="#00ffff"/>
<path d="M429.5 62.5V67" stroke="#00ffff" stroke-width="1.2"/>
<path d="M396 68L389 78" stroke="#777" stroke-width="0.6"/>
<path d="M167 53V110M174.3 53V110M164 53H176M164 110H176M164 87H176M164 96H176M164 105H176" stroke="#ffff00" stroke-width="1" fill="none"/>
<text x="164.5" y="82" font-family="Liberation Sans, sans-serif" font-weight="bold" font-size="5.2" text-anchor="middle" fill="#000" stroke="#000" stroke-width="0.25" transform="rotate(-90 164.5 82)">3850</text>
<text x="173.2" y="72" font-family="Liberation Sans, sans-serif" font-weight="bold" font-size="5.2" text-anchor="middle" fill="#000" stroke="#000" stroke-width="0.25" transform="rotate(-90 173.2 72)">2450</text>
<text x="173" y="99" font-family="Liberation Sans, sans-serif" font-weight="bold" font-size="4.8" text-anchor="middle" fill="#000" stroke="#000" stroke-width="0.25" transform="rotate(-90 173 99)">350</text>
<text x="164.6" y="104" font-family="Liberation Sans, sans-serif" font-weight="bold" font-size="4.8" text-anchor="middle" fill="#000" stroke="#000" stroke-width="0.25" transform="rotate(-90 164.6 104)">1050</text>
<path d="M253.8 26.6V107M258.8 26.6V107M263.8 26.6V107M249 26.6H272M249 58.6H270M249 87.5H262M249 94.5H262M249 105.6H300M249 66H258.8M249 75H258.8" stroke="#ffff00" stroke-width="1" fill="none"/>
<text x="257.4" y="45" font-family="Liberation Sans, sans-serif" font-weight="bold" font-size="5.2" text-anchor="middle" fill="#000" stroke="#000" stroke-width="0.25" transform="rotate(-90 257.4 45)">3400</text>
<text x="262.4" y="43" font-family="Liberation Sans, sans-serif" font-weight="bold" font-size="5.2" text-anchor="middle" fill="#000" stroke="#000" stroke-width="0.25" transform="rotate(-90 262.4 43)">3400</text>
<text x="252.6" y="64" font-family="Liberation Sans, sans-serif" font-weight="bold" font-size="4.8" text-anchor="middle" fill="#000" stroke="#000" stroke-width="0.25" transform="rotate(-90 252.6 64)">400</text>
<text x="252.6" y="77" font-family="Liberation Sans, sans-serif" font-weight="bold" font-size="4.8" text-anchor="middle" fill="#000" stroke="#000" stroke-width="0.25" transform="rotate(-90 252.6 77)">1500</text>
<text x="257.4" y="84" font-family="Liberation Sans, sans-serif" font-weight="bold" font-size="5.2" text-anchor="middle" fill="#000" stroke="#000" stroke-width="0.25" transform="rotate(-90 257.4 84)">3540</text>
<text x="262.4" y="72" font-family="Liberation Sans, sans-serif" font-weight="bold" font-size="5.2" text-anchor="middle" fill="#000" stroke="#000" stroke-width="0.25" transform="rotate(-90 262.4 72)">5840</text>
<text x="252.6" y="101" font-family="Liberation Sans, sans-serif" font-weight="bold" font-size="4.8" text-anchor="middle" fill="#000" stroke="#000" stroke-width="0.25" transform="rotate(-90 252.6 101)">1100</text>
<text x="252.6" y="92" font-family="Liberation Sans, sans-serif" font-weight="bold" font-size="4.8" text-anchor="middle" fill="#000" stroke="#000" stroke-width="0.25" transform="rotate(-90 252.6 92)">440</text>
<text x="268" y="22.8" font-family="Liberation Sans, sans-serif" font-weight="bold" font-size="5.2" text-anchor="start" fill="#000" stroke="#000" stroke-width="0.25">▽1686.29</text>
<path d="M266 24.5H286M266 56.5H286" stroke="#ffff00" stroke-width="1"/>
<text x="268" y="55" font-family="Liberation Sans, sans-serif" font-weight="bold" font-size="5.2" text-anchor="start" fill="#000" stroke="#000" stroke-width="0.25">▽1682.03</text>
<text x="268" y="102" font-family="Liberation Sans, sans-serif" font-weight="bold" font-size="4.8" text-anchor="start" fill="#000" stroke="#000" stroke-width="0.25">FL1678.528</text>
<path d="M316 80V137M320.6 80V108M312 80H330M312 87.5H324M312 95H324M312 107.6H330M312 122H320M312 136.8H322" stroke="#ffff00" stroke-width="1" fill="none"/>
<text x="319.2" y="92" font-family="Liberation Sans, sans-serif" font-weight="bold" font-size="4.8" text-anchor="middle" fill="#000" stroke="#000" stroke-width="0.25" transform="rotate(-90 319.2 92)">375</text>
<text x="323.6" y="102" font-family="Liberation Sans, sans-serif" font-weight="bold" font-size="4.8" text-anchor="middle" fill="#000" stroke="#000" stroke-width="0.25" transform="rotate(-90 323.6 102)">1150</text>
<text x="314.6" y="116" font-family="Liberation Sans, sans-serif" font-weight="bold" font-size="4.8" text-anchor="middle" fill="#000" stroke="#000" stroke-width="0.25" transform="rotate(-90 314.6 116)">850</text>
<text x="314.6" y="131" font-family="Liberation Sans, sans-serif" font-weight="bold" font-size="4.8" text-anchor="middle" fill="#000" stroke="#000" stroke-width="0.25" transform="rotate(-90 314.6 131)">1500</text>
<text x="324.4" y="132.4" font-family="Liberation Sans, sans-serif" font-weight="bold" font-size="5.2" text-anchor="start" fill="#000" stroke="#000" stroke-width="0.25">▽1677.93</text>
<path d="M317 133.6H343" stroke="#ffff00" stroke-width="1"/>
<text x="331.6" y="88.4" font-family="Liberation Sans, sans-serif" font-weight="bold" font-size="5.2" text-anchor="start" fill="#000" stroke="#000" stroke-width="0.25">▽1679.145</text>
<path d="M329.6 89.8H349M329.6 105H339" stroke="#ffff00" stroke-width="1"/>
<text x="331" y="103.6" font-family="Liberation Sans, sans-serif" font-weight="bold" font-size="4.8" text-anchor="start" fill="#000" stroke="#000" stroke-width="0.25">FL1678.528</text>
<rect x="351" y="35.8" width="23" height="4.800000000000004" fill="#00ff00"/>
<rect x="345.8" y="44.2" width="28.19999999999999" height="4.799999999999997" fill="#00ff00"/>
<rect x="328" y="56.9" width="46" height="5.0" fill="#00ff00"/>
<rect x="345.2" y="62.5" width="28.80000000000001" height="5.200000000000003" fill="#00ff00"/>
<rect x="351" y="70.8" width="23" height="4.799999999999997" fill="#00ff00"/>
<path d="M300.4 84V41.2H374.4M306.3 94.8V50.6H374.4M326.5 108V62.2H346M342 111V76.2H374.4" stroke="#ffff00" stroke-width="1.1" fill="none"/>
<path d="M298.6 81L300.4 85L302.2 81ZM340.2 107.5L342 111.5L343.8 107.5Z" fill="#ffff00"/>
<rect x="430" y="78" width="18" height="4.6" fill="#00ff00"/>
<path d="M448 84H415L412.5 92" stroke="#ffff00" stroke-width="1" fill="none"/><path d="M411 90L412.5 94L414.5 90.5Z" fill="#ffff00"/>
<path d="M457 62V45.5H536M481 95V65.5H536M506 81H536M519 100.5H536M507 106V119H536" stroke="#ffff00" stroke-width="1" fill="none"/>
<circle cx="457" cy="62" r="1.4" fill="#ffff00"/>
<circle cx="481" cy="95" r="1.4" fill="#ffff00"/>
<circle cx="506" cy="81" r="1.4" fill="#ffff00"/>
<circle cx="519" cy="100.5" r="1.4" fill="#ffff00"/>
<circle cx="507" cy="106" r="1.4" fill="#ffff00"/>
<path d="M453 62L457 59L461 62Z" fill="#ff0000"/>
<rect x="432" y="132" width="89" height="5" fill="#00ff00"/>
<rect x="432" y="142" width="89" height="5" fill="#00ff00"/>
<rect x="499" y="149.5" width="22" height="4.5" fill="#00ff00"/>
<path d="M427 125V138.4H523M404.5 134V148.4H523" stroke="#ffff00" stroke-width="1" fill="none"/>
<circle cx="427" cy="125" r="1.4" fill="#ffff00"/><circle cx="404.5" cy="134" r="1.4" fill="#ffff00"/>
</svg>
</div>

<!-- RIGHT TOP -->
<svg id="rt" class="abs" viewBox="440 40 360 250">
<path d="M536 46.6H797M536 53H797" fill="none" stroke="#ffffff" stroke-width="1.2"/>
<path d="M465.5 159V285" fill="none" stroke="#ffffff" stroke-width="1.0"/>
<path d="M479.5 159V280.5H796" fill="none" stroke="#ffffff" stroke-width="1.8"/>
<path d="M479.5 268H796" fill="none" stroke="#ffffff" stroke-width="1.2"/>
<path d="M756.5 53V58.6H796M775.5 53V58.6" fill="none" stroke="#ffffff" stroke-width="1.1"/>
<rect x="759.0" y="54.4" width="14.0" height="2.8" fill="#ffffff"/>
<rect x="778.0" y="54.4" width="15.0" height="2.8" fill="#ffffff"/>
<path d="M490 160.4H496" fill="none" stroke="#ffff00" stroke-width="1.4"/>
<rect x="585.5" y="58.8" width="5.3" height="7.4" fill="#ffffff"/>
<path d="M536 67.6H641" fill="none" stroke="#ffffff" stroke-width="0.9"/>
<rect x="582.0" y="72.5" width="13.0" height="5.5" fill="#ffffff"/>
<path d="M588.4 66V72.5M588.4 78V86" fill="none" stroke="#ffffff" stroke-width="1.2"/>
<path d="M641 67.6L646 69" fill="none" stroke="#ffbf7f" stroke-width="1.2"/>
<rect x="646.0" y="67.0" width="11.0" height="4.0" fill="#ffffff"/>
<rect x="536.0" y="75.0" width="9.5" height="3.0" fill="#ffffff"/>
<rect x="631.0" y="75.0" width="10.0" height="3.0" fill="#ffffff"/>
<path d="M540.5 78V82M636 78V82" fill="none" stroke="#ffffff" stroke-width="1"/>
<circle cx="540.5" cy="80.5" r="1.3" fill="none" stroke="#ffffff" stroke-width="0.8"/><circle cx="636" cy="80.5" r="1.3" fill="none" stroke="#ffffff" stroke-width="0.8"/>
<path d="M613.5 82V75.6H618" fill="none" stroke="#00ffff" stroke-width="1.6"/>
<path d="M541 86H636M541 89H636" fill="none" stroke="#ffbf7f" stroke-width="1.3"/>
<path d="M542 82V96M545.5 84V96M632 84V96M635.5 82V96M548 89V94M629.5 89V94" fill="none" stroke="#ffbf7f" stroke-width="1.2"/>
<rect x="587.0" y="79.0" width="3.6" height="11.0" fill="#ffbf7f"/>
<rect x="644.0" y="86.0" width="12.0" height="3.6" fill="#ffffff"/>
<path d="M650 87.8H653" fill="none" stroke="#212830" stroke-width="0.8"/>
<rect x="551.0" y="95.0" width="7.0" height="3.6" fill="#ffffff"/>
<rect x="567.5" y="95.5" width="7.5" height="3.1" fill="#ffffff"/>
<rect x="590.0" y="93.8" width="15.0" height="2.8" fill="#ffffff"/>
<rect x="612.5" y="95.0" width="8.5" height="3.6" fill="#ffffff"/>
<rect x="631.0" y="95.0" width="8.0" height="3.6" fill="#ffffff"/>
<defs><pattern id="hat" x="0" y="0" width="3" height="3" patternUnits="userSpaceOnUse"><path d="M0 0.5H3M0.5 0V3" stroke="#7c8288" stroke-width="0.7" fill="none"/></pattern></defs>
<path d="M536 100H549V114.5H536Z" fill="url(#hat)"/>
<path d="M636 100H662V104L650 114L636 115Z" fill="url(#hat)"/>
<rect x="549.0" y="100.0" width="80.0" height="4.0" fill="#ff00ff"/>
<path d="M549 104V107.4H629V104M553 107.4V127H623V107.4M541 100V142.5M636 100V142.5M541 130H636" fill="none" stroke="#ff00ff" stroke-width="1.1"/>
<path d="M541 100H549M629 100H636" fill="none" stroke="#ff00ff" stroke-width="1"/>
<rect x="553.0" y="107.4" width="6.0" height="3.1" fill="#ffbf7f"/>
<rect x="617.0" y="107.4" width="6.0" height="3.1" fill="#ffbf7f"/>
<path d="M546 100V130M549.4 104V130" fill="none" stroke="#00ff00" stroke-width="1.0"/>
<path d="M630 100V130" fill="none" stroke="#00ff00" stroke-width="1.6"/>
<path d="M536 114L545 114.5L549 119L567.5 122.5L587.5 125H605L626 119L634 115L650 114L662 104" fill="none" stroke="#00ffff" stroke-width="1.2"/>
<path d="M588.8 92.5V141" fill="none" stroke="#ff0000" stroke-width="1.2"/>
<rect x="576.0" y="109.0" width="13.0" height="3.5" fill="#ffffff"/>
<rect x="566.0" y="117.0" width="13.0" height="3.0" fill="#ffffff"/>
<path d="M579 120L582 125" fill="none" stroke="#ffffff" stroke-width="0.8"/>
<rect x="594.0" y="115.5" width="15.0" height="2.5" fill="#ffffff"/>
<path d="M591 116.8H594" fill="none" stroke="#ffffff" stroke-width="0.8"/>
<rect x="570.5" y="130.5" width="8.5" height="4.0" fill="#ffffff"/>
<rect x="592.5" y="130.5" width="17.0" height="4.0" fill="#ffffff"/>
<path d="M568 128.5L570.5 134M590 128.5L592.5 134" fill="none" stroke="#ffffff" stroke-width="0.8"/>
<path d="M536 130.8H641M536 130.8V142.5H557.5M641 130.8V142.5H619" fill="none" stroke="#ffbf7f" stroke-width="1.2"/>
<rect x="534.8" y="129.5" width="2.7" height="2.5" fill="#ffffff"/>
<rect x="639.8" y="129.5" width="2.6" height="2.5" fill="#ffffff"/>
<rect x="637.0" y="133.0" width="2.5" height="5.0" fill="#ffbf7f"/>
<rect x="548.0" y="123.5" width="2.5" height="2.5" fill="#ffbf7f"/>
<path d="M541 140V151H557V140" fill="none" stroke="#ffbf7f" stroke-width="1.1"/>
<path d="M541 143.5H557" fill="none" stroke="#ff00ff" stroke-width="1.6" stroke-dasharray="1.6 1.6"/>
<path d="M547 140V171M553 140V171M547 171H553" fill="none" stroke="#00ff00" stroke-width="1.1"/>
<path d="M550 145V158" fill="none" stroke="#ff00ff" stroke-width="1.0"/>
<path d="M546 158H554M546 161.5H554" fill="none" stroke="#ffbf7f" stroke-width="1.1"/>
<path d="M542 144V151M556 144V151" fill="none" stroke="#ffbf7f" stroke-width="1.0"/>
<path d="M620 140V151H636V140" fill="none" stroke="#ffbf7f" stroke-width="1.1"/>
<path d="M620 143.5H636" fill="none" stroke="#ff00ff" stroke-width="1.6" stroke-dasharray="1.6 1.6"/>
<path d="M626 140V171M632 140V171M626 171H632" fill="none" stroke="#00ff00" stroke-width="1.1"/>
<path d="M629 145V158" fill="none" stroke="#ff00ff" stroke-width="1.0"/>
<path d="M625 158H633M625 161.5H633" fill="none" stroke="#ffbf7f" stroke-width="1.1"/>
<path d="M621 144V151M635 144V151" fill="none" stroke="#ffbf7f" stroke-width="1.0"/>
<path d="M558 154H620" fill="none" stroke="#ffbf7f" stroke-width="1.4"/>
<rect x="586.0" y="151.0" width="4.0" height="4.0" fill="#ffbf7f"/>
<rect x="559.0" y="141.0" width="4.0" height="2.4" fill="#ffffff"/>
<rect x="556.0" y="159.5" width="15.0" height="4.5" fill="#ffffff"/>
<path d="M553 165H571" fill="none" stroke="#ffffff" stroke-width="0.8"/>
<rect x="555.0" y="168.0" width="7.5" height="4.0" fill="#ffffff"/>
<rect x="632.5" y="159.5" width="15.0" height="4.5" fill="#ffffff"/>
<path d="M630 165H648" fill="none" stroke="#ffffff" stroke-width="0.8"/>
<rect x="631.0" y="168.0" width="9.0" height="4.0" fill="#ffffff"/>
<rect x="582.5" y="172.5" width="10.0" height="5.0" fill="#ffffff"/>
<path d="M581 178.3H602.5" fill="none" stroke="#ffffff" stroke-width="1.2"/>
<circle cx="549.5" cy="176" r="2.2" fill="none" stroke="#ffffff" stroke-width="0.9"/><circle cx="628" cy="176" r="2" fill="#ffffff"/>
<path d="M613 167.5V174H617.5" fill="none" stroke="#00ffff" stroke-width="1.6"/>
<path d="M662.5 97.5V108L660.5 110L664.5 112L662.5 114V122.5" fill="none" stroke="#ffbf7f" stroke-width="1"/>
<path d="M673 99H679.5V160H673Z" fill="none" stroke="#ffff00" stroke-width="1.1"/>
<circle cx="676.2" cy="102.5" r="2" fill="none" stroke="#ffff00" stroke-width="0.9"/>
<circle cx="676.2" cy="111" r="2" fill="none" stroke="#ffff00" stroke-width="0.9"/>
<circle cx="676.2" cy="130.5" r="2" fill="none" stroke="#ffff00" stroke-width="0.9"/>
<circle cx="676.2" cy="149.5" r="2" fill="none" stroke="#ffff00" stroke-width="0.9"/>
<rect x="666.0" y="98.0" width="6.0" height="3.0" fill="#ffff00"/>
<rect x="666.0" y="103.0" width="6.0" height="2.5" fill="#ffff00"/>
<rect x="666.0" y="116.0" width="6.0" height="2.0" fill="#ffff00"/>
<rect x="666.0" y="139.5" width="6.0" height="2.5" fill="#ffff00"/>
<rect x="666.0" y="158.0" width="6.0" height="3.0" fill="#ffff00"/>
<rect x="680.0" y="101.0" width="7.0" height="2.0" fill="#ffff00"/>
<rect x="680.0" y="109.0" width="9.0" height="3.0" fill="#ffff00"/>
<rect x="680.0" y="129.5" width="6.0" height="1.7" fill="#ffff00"/>
<rect x="680.0" y="148.0" width="5.0" height="2.0" fill="#ffff00"/>
<rect x="675.0" y="96.0" width="2.5" height="3.0" fill="#ffff00"/>
<rect x="688.0" y="97.0" width="6.0" height="2.6" fill="#ffffff"/>
<rect x="693.0" y="103.4" width="84.0" height="3.2" fill="#ffffff"/>
<rect x="693.0" y="108.2" width="97.0" height="3.2" fill="#ffffff"/>
<rect x="693.0" y="113.0" width="96.0" height="3.2" fill="#ffffff"/>
<rect x="693.0" y="117.8" width="50.0" height="3.2" fill="#ffffff"/>
<rect x="693.0" y="122.8" width="101.0" height="3.2" fill="#ffffff"/>
<rect x="693.0" y="127.6" width="63.0" height="3.2" fill="#ffffff"/>
<rect x="693.0" y="132.6" width="96.0" height="3.2" fill="#ffffff"/>
<rect x="693.0" y="137.4" width="41.0" height="3.2" fill="#ffffff"/>
<rect x="693.0" y="142.6" width="97.0" height="3.8" fill="#ffffff"/>
<path d="M489.5 187.4H713.5M489.5 190H713.5" fill="none" stroke="#ffbf7f" stroke-width="1.0"/>
<rect x="494.8" y="187.0" width="2.4" height="3.4" fill="#ffbf7f"/>
<rect x="518.8" y="187.0" width="2.4" height="3.4" fill="#ffbf7f"/>
<rect x="555.8" y="187.0" width="2.4" height="3.4" fill="#ffbf7f"/>
<rect x="599.8" y="187.0" width="2.4" height="3.4" fill="#ffbf7f"/>
<rect x="644.8" y="187.0" width="2.4" height="3.4" fill="#ffbf7f"/>
<rect x="681.8" y="187.0" width="2.4" height="3.4" fill="#ffbf7f"/>
<rect x="705.8" y="187.0" width="2.4" height="3.4" fill="#ffbf7f"/>
<path d="M489.5 186V201M713.5 186V201M505 190V196.7M577.5 190V200.5M625.5 190V200.5M698 190V196.7" fill="none" stroke="#ffbf7f" stroke-width="1.1"/>
<rect x="599.0" y="183.0" width="4.0" height="3.0" fill="#ffbf7f"/>
<path d="M489.6 225.2L497 220.7H706L713.4 225.2V229.7H489.6Z" fill="none" stroke="#00ffff" stroke-width="1.1"/>
<path d="M492 227.2H711" fill="none" stroke="#00ffff" stroke-width="0.9"/>
<rect x="508.5" y="222.2" width="186.0" height="4.6" fill="#c81a1a"/>
<path d="M510.0 222.6l1.1 1.9l-1.1 1.9l-1.1 -1.9z M512.6 222.6l1.1 1.9l-1.1 1.9l-1.1 -1.9z M515.2 222.6l1.1 1.9l-1.1 1.9l-1.1 -1.9z M517.8 222.6l1.1 1.9l-1.1 1.9l-1.1 -1.9z M520.4 222.6l1.1 1.9l-1.1 1.9l-1.1 -1.9z M523.0 222.6l1.1 1.9l-1.1 1.9l-1.1 -1.9z M525.6 222.6l1.1 1.9l-1.1 1.9l-1.1 -1.9z M528.2 222.6l1.1 1.9l-1.1 1.9l-1.1 -1.9z M530.8 222.6l1.1 1.9l-1.1 1.9l-1.1 -1.9z M533.4 222.6l1.1 1.9l-1.1 1.9l-1.1 -1.9z M536.0 222.6l1.1 1.9l-1.1 1.9l-1.1 -1.9z M538.6 222.6l1.1 1.9l-1.1 1.9l-1.1 -1.9z M541.2 222.6l1.1 1.9l-1.1 1.9l-1.1 -1.9z M543.8 222.6l1.1 1.9l-1.1 1.9l-1.1 -1.9z M546.4 222.6l1.1 1.9l-1.1 1.9l-1.1 -1.9z M549.0 222.6l1.1 1.9l-1.1 1.9l-1.1 -1.9z M551.6 222.6l1.1 1.9l-1.1 1.9l-1.1 -1.9z M554.2 222.6l1.1 1.9l-1.1 1.9l-1.1 -1.9z M556.8 222.6l1.1 1.9l-1.1 1.9l-1.1 -1.9z M559.4 222.6l1.1 1.9l-1.1 1.9l-1.1 -1.9z M562.0 222.6l1.1 1.9l-1.1 1.9l-1.1 -1.9z M564.6 222.6l1.1 1.9l-1.1 1.9l-1.1 -1.9z M567.2 222.6l1.1 1.9l-1.1 1.9l-1.1 -1.9z M569.8 222.6l1.1 1.9l-1.1 1.9l-1.1 -1.9z M572.4 222.6l1.1 1.9l-1.1 1.9l-1.1 -1.9z M575.0 222.6l1.1 1.9l-1.1 1.9l-1.1 -1.9z M577.6 222.6l1.1 1.9l-1.1 1.9l-1.1 -1.9z M580.2 222.6l1.1 1.9l-1.1 1.9l-1.1 -1.9z M582.8 222.6l1.1 1.9l-1.1 1.9l-1.1 -1.9z M585.4 222.6l1.1 1.9l-1.1 1.9l-1.1 -1.9z M588.0 222.6l1.1 1.9l-1.1 1.9l-1.1 -1.9z M590.6 222.6l1.1 1.9l-1.1 1.9l-1.1 -1.9z M593.2 222.6l1.1 1.9l-1.1 1.9l-1.1 -1.9z M595.8 222.6l1.1 1.9l-1.1 1.9l-1.1 -1.9z M598.4 222.6l1.1 1.9l-1.1 1.9l-1.1 -1.9z M601.0 222.6l1.1 1.9l-1.1 1.9l-1.1 -1.9z M603.6 222.6l1.1 1.9l-1.1 1.9l-1.1 -1.9z M606.2 222.6l1.1 1.9l-1.1 1.9l-1.1 -1.9z M608.8 222.6l1.1 1.9l-1.1 1.9l-1.1 -1.9z M611.4 222.6l1.1 1.9l-1.1 1.9l-1.1 -1.9z M614.0 222.6l1.1 1.9l-1.1 1.9l-1.1 -1.9z M616.6 222.6l1.1 1.9l-1.1 1.9l-1.1 -1.9z M619.2 222.6l1.1 1.9l-1.1 1.9l-1.1 -1.9z M621.8 222.6l1.1 1.9l-1.1 1.9l-1.1 -1.9z M624.4 222.6l1.1 1.9l-1.1 1.9l-1.1 -1.9z M627.0 222.6l1.1 1.9l-1.1 1.9l-1.1 -1.9z M629.6 222.6l1.1 1.9l-1.1 1.9l-1.1 -1.9z M632.2 222.6l1.1 1.9l-1.1 1.9l-1.1 -1.9z M634.8 222.6l1.1 1.9l-1.1 1.9l-1.1 -1.9z M637.4 222.6l1.1 1.9l-1.1 1.9l-1.1 -1.9z M640.0 222.6l1.1 1.9l-1.1 1.9l-1.1 -1.9z M642.6 222.6l1.1 1.9l-1.1 1.9l-1.1 -1.9z M645.2 222.6l1.1 1.9l-1.1 1.9l-1.1 -1.9z M647.8 222.6l1.1 1.9l-1.1 1.9l-1.1 -1.9z M650.4 222.6l1.1 1.9l-1.1 1.9l-1.1 -1.9z M653.0 222.6l1.1 1.9l-1.1 1.9l-1.1 -1.9z M655.6 222.6l1.1 1.9l-1.1 1.9l-1.1 -1.9z M658.2 222.6l1.1 1.9l-1.1 1.9l-1.1 -1.9z M660.8 222.6l1.1 1.9l-1.1 1.9l-1.1 -1.9z M663.4 222.6l1.1 1.9l-1.1 1.9l-1.1 -1.9z M666.0 222.6l1.1 1.9l-1.1 1.9l-1.1 -1.9z M668.6 222.6l1.1 1.9l-1.1 1.9l-1.1 -1.9z M671.2 222.6l1.1 1.9l-1.1 1.9l-1.1 -1.9z M673.8 222.6l1.1 1.9l-1.1 1.9l-1.1 -1.9z M676.4 222.6l1.1 1.9l-1.1 1.9l-1.1 -1.9z M679.0 222.6l1.1 1.9l-1.1 1.9l-1.1 -1.9z M681.6 222.6l1.1 1.9l-1.1 1.9l-1.1 -1.9z M684.2 222.6l1.1 1.9l-1.1 1.9l-1.1 -1.9z M686.8 222.6l1.1 1.9l-1.1 1.9l-1.1 -1.9z M689.4 222.6l1.1 1.9l-1.1 1.9l-1.1 -1.9z M692.0 222.6l1.1 1.9l-1.1 1.9l-1.1 -1.9z" fill="#3a1c20"/>
<ellipse cx="505" cy="202.0" rx="2.7" ry="3.1" fill="#8e4040"/>
<path d="M505 197.6V199" fill="none" stroke="#8e4040" stroke-width="1.2"/>
<path d="M505 204V215" fill="none" stroke="#8e4040" stroke-width="1.8"/>
<path d="M505 207.0V208.5M505 210.5V211.5" fill="none" stroke="#8e4040" stroke-width="3.0"/>
<path d="M503.5 212H506.5L507.8 215H502.2Z" fill="#8e4040"/>
<circle cx="505" cy="202.0" r="0.9" fill="#212830"/>
<path d="M501.6 220.6V217.4H508.4V220.6" fill="none" stroke="#00ffff" stroke-width="0.9"/>
<rect x="502.3" y="218.0" width="5.4" height="9.6" fill="#8e4040"/>
<path d="M501.4 228.2H508.6" fill="none" stroke="#ff0000" stroke-width="1.2"/>
<ellipse cx="698" cy="202.0" rx="2.7" ry="3.1" fill="#8e4040"/>
<path d="M698 197.6V199" fill="none" stroke="#8e4040" stroke-width="1.2"/>
<path d="M698 204V215" fill="none" stroke="#8e4040" stroke-width="1.8"/>
<path d="M698 207.0V208.5M698 210.5V211.5" fill="none" stroke="#8e4040" stroke-width="3.0"/>
<path d="M696.5 212H699.5L700.8 215H695.2Z" fill="#8e4040"/>
<circle cx="698" cy="202.0" r="0.9" fill="#212830"/>
<path d="M694.6 220.6V217.4H701.4V220.6" fill="none" stroke="#00ffff" stroke-width="0.9"/>
<rect x="695.3" y="218.0" width="5.4" height="9.6" fill="#8e4040"/>
<path d="M694.4 228.2H701.6" fill="none" stroke="#ff0000" stroke-width="1.2"/>
<ellipse cx="537" cy="184.6" rx="2.7" ry="3.1" fill="#8e4040"/>
<path d="M537 180.2V181.6" fill="none" stroke="#8e4040" stroke-width="1.2"/>
<path d="M537 186.6V199" fill="none" stroke="#8e4040" stroke-width="1.8"/>
<path d="M537 189.6V191.1M537 193.1V194.1" fill="none" stroke="#8e4040" stroke-width="3.0"/>
<path d="M535.5 196H538.5L539.8 199H534.2Z" fill="#8e4040"/>
<circle cx="537" cy="184.6" r="0.9" fill="#212830"/>
<path d="M532.4 229V203L533.6 200.6H540.4L541.6 203V229" fill="none" stroke="#00ffff" stroke-width="1"/>
<path d="M533.6 203V215.5M540.4 203V215.5M533.6 203H540.4M533.6 206.2H540.4M533.6 209.4H540.4M533.6 212.6H540.4" fill="none" stroke="#ff0000" stroke-width="0.9"/>
<rect x="533.4" y="215.5" width="7.2" height="3.9" fill="#ff0000"/>
<rect x="534.4" y="219.4" width="5.2" height="8.2" fill="#8e4040"/>
<path d="M533.4 219.4V229M540.6 219.4V229" fill="none" stroke="#ff0000" stroke-width="0.8"/>
<path d="M533 231.5H541M533.4 234H540.6M533.4 236.5H540.6M533.4 239H540.6M533.4 230V240.5M540.6 230V240.5" fill="none" stroke="#ff0000" stroke-width="0.9"/>
<ellipse cx="666" cy="184.6" rx="2.7" ry="3.1" fill="#8e4040"/>
<path d="M666 180.2V181.6" fill="none" stroke="#8e4040" stroke-width="1.2"/>
<path d="M666 186.6V199" fill="none" stroke="#8e4040" stroke-width="1.8"/>
<path d="M666 189.6V191.1M666 193.1V194.1" fill="none" stroke="#8e4040" stroke-width="3.0"/>
<path d="M664.5 196H667.5L668.8 199H663.2Z" fill="#8e4040"/>
<circle cx="666" cy="184.6" r="0.9" fill="#212830"/>
<path d="M661.4 229V203L662.6 200.6H669.4L670.6 203V229" fill="none" stroke="#00ffff" stroke-width="1"/>
<path d="M662.6 203V215.5M669.4 203V215.5M662.6 203H669.4M662.6 206.2H669.4M662.6 209.4H669.4M662.6 212.6H669.4" fill="none" stroke="#ff0000" stroke-width="0.9"/>
<rect x="662.4" y="215.5" width="7.2" height="3.9" fill="#ff0000"/>
<rect x="663.4" y="219.4" width="5.2" height="8.2" fill="#8e4040"/>
<path d="M662.4 219.4V229M669.6 219.4V229" fill="none" stroke="#ff0000" stroke-width="0.8"/>
<path d="M662 231.5H670M662.4 234H669.6M662.4 236.5H669.6M662.4 239H669.6M662.4 230V240.5M669.6 230V240.5" fill="none" stroke="#ff0000" stroke-width="0.9"/>
<defs><pattern id="brk2" x="540" y="230.4" width="5" height="4" patternUnits="userSpaceOnUse"><path d="M0 0.4H5M0 2.4H5M1.2 0.4V2.4M3.6 2.4V4.4" stroke="#ff0000" stroke-width="0.7" fill="none"/></pattern>
<clipPath id="w2"><path d="M522.5 230L680.5 230L662 241L644.5 242.5L640 247Q601.5 222.5 563 247L558.5 242.5L541 241Z"/></clipPath></defs>
<rect x="520" y="229.6" width="164" height="20" fill="url(#brk2)" clip-path="url(#w2)"/>
<path d="M522.5 230L680.5 230L662 241L644.5 242.5L640 247Q601.5 222.5 563 247L558.5 242.5L541 241Z" fill="#c01818" fill-opacity="0.1"/>
<path d="M522.5 230L541 241L558.5 242.5L563 247M680.5 230L662 241L644.5 242.5L640 247" fill="none" stroke="#00ffff" stroke-width="1"/>
<path d="M563 247.4Q601.5 222.4 640 247.4" fill="none" stroke="#ff0000" stroke-width="2.2"/>
<path d="M567 247.6Q601.5 228 636 247.6" fill="none" stroke="#ff0000" stroke-width="0.9"/>
<path d="M566.7 246.2H636.3" fill="none" stroke="#1c6ef2" stroke-width="1.2"/>
<path d="M563 247L587 252.5H616L640 247" fill="none" stroke="#00ffff" stroke-width="1.1"/>
<rect x="598.2" y="230.5" width="5.6" height="6.0" fill="#8e4040"/>
<path d="M572.1999999999999 213.8H581.4L579.1999999999999 216.8H574.4Z" fill="none" stroke="#ff0000" stroke-width="0.9"/>
<rect x="574.5" y="216.8" width="4.6" height="11.2" fill="#8e4040"/>
<path d="M573.5999999999999 220.7V217.2H580.0V220.7M573.5999999999999 220.7V229M580.0 220.7V229" fill="none" stroke="#00ffff" stroke-width="0.8"/>
<path d="M573.8 228.4H579.8" fill="none" stroke="#ff0000" stroke-width="1.1"/>
<path d="M621.6 213.8H630.8000000000001L628.6 216.8H623.8000000000001Z" fill="none" stroke="#ff0000" stroke-width="0.9"/>
<rect x="623.9" y="216.8" width="4.6" height="11.2" fill="#8e4040"/>
<path d="M623.0 220.7V217.2H629.4000000000001V220.7M623.0 220.7V229M629.4000000000001 220.7V229" fill="none" stroke="#00ffff" stroke-width="0.8"/>
<path d="M623.2 228.4H629.2" fill="none" stroke="#ff0000" stroke-width="1.1"/>
<path d="M584 223H592V226.4H584ZM594 223H609V226.4H594ZM611 223H619V226.4H611Z" fill="none" stroke="#2a2f38" stroke-width="0.9"/>
<rect x="587.0" y="256.0" width="19.0" height="5.4" fill="#ffffff"/>
<path d="M587 261.8H614" fill="none" stroke="#ffffff" stroke-width="1.0"/>
<path d="M479.5 268.4H796" fill="none" stroke="#ffffff" stroke-width="1.6"/>
<path d="M491 268V280M547.5 268V280M558 268V280M567 268V280M576 268V280M585 268V280M594 268V280M603 268V280M612 268V280M621 268V280M630 268V280M640 268V280M650 268V280M658 268V280M667 268V280M676 268V280M685 268V280M731.7 268V280M737 268V280M774.5 268V280M783.5 268V280M547.5 274H685M774.5 272.6H796M774.5 274.8H796" fill="none" stroke="#ffffff" stroke-width="1.0"/>
<circle cx="485.5" cy="274.2" r="3.6" fill="none" stroke="#ffffff" stroke-width="1.2"/>
<path d="M483.5 272.5L487.5 276M487.5 272.5L483.5 276" stroke="#ffffff" stroke-width="0.8"/>
<rect x="491.5" y="269.4" width="55.5" height="4.2" fill="#ffffff"/>
<rect x="491.5" y="274.8" width="55.5" height="4.2" fill="#ffffff"/>
<path d="M493 274.2H530" fill="none" stroke="#9aa0a8" stroke-width="0.8"/>
<rect x="549.0" y="270.2" width="7.5" height="2.4" fill="#f0f0f0"/>
<rect x="549.0" y="275.6" width="7.5" height="2.4" fill="#f0f0f0"/>
<rect x="568.0" y="270.0" width="7.0" height="2.4" fill="#e8e8e8"/>
<rect x="568.0" y="276.0" width="7.0" height="2.2" fill="#e8e8e8"/>
<rect x="586.0" y="270.0" width="7.0" height="2.4" fill="#e8e8e8"/>
<rect x="586.0" y="276.0" width="7.0" height="2.2" fill="#e8e8e8"/>
<rect x="604.0" y="270.0" width="7.0" height="2.4" fill="#e8e8e8"/>
<rect x="604.0" y="276.0" width="7.0" height="2.2" fill="#e8e8e8"/>
<rect x="622.0" y="270.0" width="7.0" height="2.4" fill="#e8e8e8"/>
<rect x="622.0" y="276.0" width="7.0" height="2.2" fill="#e8e8e8"/>
<rect x="641.0" y="270.0" width="7.0" height="2.4" fill="#e8e8e8"/>
<rect x="641.0" y="276.0" width="7.0" height="2.2" fill="#e8e8e8"/>
<rect x="668.0" y="270.0" width="7.0" height="2.4" fill="#e8e8e8"/>
<rect x="668.0" y="276.0" width="7.0" height="2.2" fill="#e8e8e8"/>
<rect x="690.5" y="268.8" width="33.5" height="3.0" fill="#ffffff"/>
<rect x="686.0" y="275.0" width="44.0" height="3.2" fill="#ffffff"/>
<rect x="732.6" y="271.0" width="3.0" height="2.0" fill="#ffffff"/>
<rect x="732.6" y="275.2" width="3.0" height="2.0" fill="#ffffff"/>
<rect x="746.7" y="271.0" width="17.3" height="2.0" fill="#ffffff"/>
<rect x="785.7" y="275.4" width="9.0" height="2.8" fill="#ffffff"/>
<rect x="775.0" y="269.0" width="21.0" height="3.2" fill="#ffffff"/>
<rect x="775.0" y="273.3" width="8.0" height="1.2" fill="#ffffff"/>
</svg>

<!-- RIGHT BOTTOM -->
<svg id="rb" class="abs" viewBox="440 280 360 260">
<defs><filter id="glow" x="-5%" y="-5%" width="110%" height="110%"><feGaussianBlur stdDeviation="1.1"/></filter></defs>
<g filter="url(#glow)" opacity="0.75">
<path d="M461.5 286H795.5V522.5H461.5Z" fill="none" stroke="#ffffff" stroke-width="3.2"/>
<path d="M474.5 292.5H792V518.5H474.5Z" fill="none" stroke="#ffffff" stroke-width="2.2"/>
<path d="M474.5 505.5H792" fill="none" stroke="#ffffff" stroke-width="1.6"/>
</g>
<path d="M461.5 286H795.5V522.5H461.5Z" fill="none" stroke="#ffffff" stroke-width="1.6"/>
<path d="M474.5 292.5H792V518.5H474.5Z" fill="none" stroke="#ffffff" stroke-width="1.3"/>
<path d="M474.5 505.5H792" fill="none" stroke="#ffffff" stroke-width="1.1"/>
<path d="M783.5 261V329.6" fill="none" stroke="#ffffff" stroke-width="1.1"/>
<path d="M749 295.7H796" fill="none" stroke="#ffffff" stroke-width="0.9"/>
<g filter="url(#glow)" opacity="0.7">
<rect x="750.0" y="291.2" width="42.0" height="5.0" fill="#ffffff"/>
</g>
<rect x="750.5" y="291.7" width="42.0" height="4.0" fill="#cfdcff"/>
<path d="M750.5 291.7H792.5V295.7H750.5Z" fill="none" stroke="#ffffff" stroke-width="0.8"/>
<rect x="751.5" y="292.6" width="2.0" height="2.4" fill="#3a4150"/>
<rect x="768.0" y="292.6" width="3.0" height="2.4" fill="#3a4150"/>
<rect x="776.0" y="292.6" width="2.5" height="2.4" fill="#3a4150"/>
<rect x="787.0" y="292.6" width="4.0" height="2.4" fill="#3a4150"/>
<path d="M780.5 292.7H786.5V298H780.5Z" fill="#b8c8f0" stroke="#ffffff" stroke-width="1"/>
<path d="M792 292V518" fill="none" stroke="#cfdcff" stroke-width="1.2"/>
<path d="M514.3 320.8H624M514.3 323.4H624M514.3 320V331.5M624 320V331.5" fill="none" stroke="#ffbf7f" stroke-width="1.0"/>
<rect x="551.7" y="325.0" width="15.3" height="3.0" fill="#ffffff"/>
<rect x="592.7" y="324.0" width="20.0" height="5.0" fill="#ffffff"/>
<rect x="538.0" y="328.2" width="8.7" height="3.4" fill="#ffffff"/>
<path d="M546.7 331L551 334M590 331L592.7 328" fill="none" stroke="#ffffff" stroke-width="0.7"/>
<path d="M515 332H623.3M515 334.4H623.3" fill="none" stroke="#00ffff" stroke-width="1.2"/>
<path d="M520.0 334.6h4v2.6h-4z M527.1 334.6h4v2.6h-4z M534.2 334.6h4v2.6h-4z M541.3 334.6h4v2.6h-4z M548.4 334.6h4v2.6h-4z M555.5 334.6h4v2.6h-4z M562.6 334.6h4v2.6h-4z M569.7 334.6h4v2.6h-4z M576.8 334.6h4v2.6h-4z M583.9 334.6h4v2.6h-4z M591.0 334.6h4v2.6h-4z M598.1 334.6h4v2.6h-4z M605.2 334.6h4v2.6h-4z M612.3 334.6h4v2.6h-4z M619.4 334.6h4v2.6h-4z" fill="#59626c" stroke="#7d8790" stroke-width="0.8"/>
<path d="M515 337.6H623.3" fill="none" stroke="#00ffff" stroke-width="1.1"/>
<path d="M515 341.8H623.3" fill="none" stroke="#00ffff" stroke-width="1.0"/>
<path d="M519 335V361.7M619.3 335V361.7" fill="none" stroke="#00ff00" stroke-width="1.3"/>
<path d="M515 332V373.5M623.3 332V373.5" fill="none" stroke="#00ffff" stroke-width="1.1"/>
<path d="M519 361.7H619.3" fill="none" stroke="#00ffff" stroke-width="1.1"/>
<path d="M519 361.7V358M522 361.7V358H519M543 361.7V358H546V361.7M589.5 361.7V358H592.5V361.7M616.5 358H619.3M616.5 361.7V358" fill="none" stroke="#00ffff" stroke-width="1.0"/>
<path d="M515 371.8H623.3M514.3 374H624" fill="none" stroke="#00ffff" stroke-width="1.0"/>
<rect x="506.7" y="337.0" width="3.3" height="3.0" fill="#ffbf7f"/>
<rect x="506.7" y="348.5" width="3.3" height="3.5" fill="#ffbf7f"/>
<rect x="506.7" y="365.0" width="3.3" height="3.5" fill="#ffbf7f"/>
<path d="M506 340.2H517M506 361.7H519" fill="none" stroke="#ffbf7f" stroke-width="1.0"/>
<rect x="526.7" y="351.7" width="6.6" height="3.3" fill="#ffbf7f"/>
<path d="M519 356H545" fill="none" stroke="#ffbf7f" stroke-width="1.0"/>
<path d="M560 357H576M568.3 352V364" fill="none" stroke="#ffbf7f" stroke-width="1.0"/>
<rect x="565.0" y="359.0" width="6.5" height="4.0" fill="#ffbf7f"/>
<rect x="580.0" y="352.0" width="13.0" height="4.0" fill="#ffffff"/>
<path d="M576 358L580 354" fill="none" stroke="#ffffff" stroke-width="0.7"/>
<rect x="605.0" y="340.0" width="7.0" height="3.4" fill="#ffffff"/>
<rect x="573.0" y="344.6" width="15.0" height="2.8" fill="#ffffff"/>
<path d="M514.3 374V386H624V374" fill="none" stroke="#ffbf7f" stroke-width="1.0"/>
<rect x="536.0" y="378.0" width="3.4" height="3.4" fill="#ffbf7f"/>
<rect x="566.6" y="378.0" width="3.4" height="3.4" fill="#ffbf7f"/>
<rect x="597.6" y="378.0" width="3.4" height="3.4" fill="#ffbf7f"/>
<rect x="524.5" y="369.0" width="2.5" height="7.0" fill="#ffbf7f"/>
<rect x="491.7" y="377.3" width="14.3" height="5.0" fill="#ffffff"/>
<path d="M506 380L515 374" fill="none" stroke="#ffffff" stroke-width="0.8"/>
<rect x="626.7" y="370.0" width="6.6" height="2.7" fill="#ffffff"/>
<path d="M622 373.5L626.7 371.5" fill="none" stroke="#ffffff" stroke-width="0.7"/>
<rect x="618.3" y="394.3" width="14.4" height="3.4" fill="#ffffff"/>
<path d="M615 398.4H633" fill="none" stroke="#ffffff" stroke-width="0.8"/>
<path d="M519.3 372.7V404.3H526.6999999999999V372.7" fill="none" stroke="#00ffff" stroke-width="1.2"/>
<path d="M523.0 375V402" fill="none" stroke="#ff0000" stroke-width="1.2"/>
<path d="M518.3 372.4H527.6999999999999" fill="none" stroke="#00ff00" stroke-width="1.4"/>
<rect x="521.7" y="389.0" width="2.6" height="2.4" fill="#ffbf7f"/>
<path d="M550 372.7V404.3H557.4V372.7" fill="none" stroke="#00ffff" stroke-width="1.2"/>
<path d="M553.7 375V402" fill="none" stroke="#ff0000" stroke-width="1.2"/>
<path d="M549 372.4H558.4" fill="none" stroke="#00ff00" stroke-width="1.4"/>
<rect x="552.4" y="389.0" width="2.6" height="2.4" fill="#ffbf7f"/>
<path d="M580 372.7V404.3H587.4V372.7" fill="none" stroke="#00ffff" stroke-width="1.2"/>
<path d="M583.7 375V402" fill="none" stroke="#ff0000" stroke-width="1.2"/>
<path d="M579 372.4H588.4" fill="none" stroke="#00ff00" stroke-width="1.4"/>
<rect x="582.4" y="389.0" width="2.6" height="2.4" fill="#ffbf7f"/>
<path d="M610.7 372.7V404.3H618.1V372.7" fill="none" stroke="#00ffff" stroke-width="1.2"/>
<path d="M614.4000000000001 375V402" fill="none" stroke="#ff0000" stroke-width="1.2"/>
<path d="M609.7 372.4H619.1" fill="none" stroke="#00ff00" stroke-width="1.4"/>
<rect x="613.1" y="389.0" width="2.6" height="2.4" fill="#ffbf7f"/>
<path d="M568.3 313V376.7" fill="none" stroke="#ff0000" stroke-width="1.2"/>
<rect x="565.0" y="408.3" width="8.3" height="5.1" fill="#ffffff"/>
<path d="M565 413.6H580" fill="none" stroke="#ffffff" stroke-width="1.1"/>
<path d="M510 432.7V427.6H513.3M537 432.7V427.6H540.7" fill="none" stroke="#ffffff" stroke-width="1.4"/>
<path d="M510 470V475H514M537 470V475H541" fill="none" stroke="#ffffff" stroke-width="1.4"/>
<rect x="514.6" y="431.0" width="1.4" height="1.4" fill="#ffffff"/>
<rect x="541.6" y="431.0" width="1.4" height="1.4" fill="#ffffff"/>
<rect x="515.0" y="472.6" width="1.4" height="1.4" fill="#ffffff"/>
<rect x="542.0" y="472.6" width="1.4" height="1.4" fill="#ffffff"/>
<rect x="566.7" y="433.3" width="3.3" height="6.0" fill="#ffbf7f"/>
<rect x="536.7" y="437.3" width="2.6" height="2.0" fill="#ffbf7f"/>
<rect x="598.3" y="437.3" width="2.7" height="2.0" fill="#ffbf7f"/>
<path d="M514.3 440H624M514.3 442.7H624M514.3 440V463.3M624 440V463.3M521.7 440V450M553.3 440V450M583.3 440V450M614.3 440V450" fill="none" stroke="#ffbf7f" stroke-width="1.0"/>
<path d="M516 445H624V459.3H516ZM516 450.7H624" fill="none" stroke="#00ffff" stroke-width="1.1"/>
<path d="M517.3 451.7H621.7V459.3H517.3Z" fill="none" stroke="#00ff00" stroke-width="1.5"/>
<path d="M568.3 433V470.7" fill="none" stroke="#ff0000" stroke-width="1.1"/>
<circle cx="522.7" cy="455" r="3.6" fill="none" stroke="#ffbf7f" stroke-width="0.9"/>
<path d="M517.2 455H528.2M522.7 450V460" fill="none" stroke="#ff0000" stroke-width="1.3"/>
<circle cx="552.7" cy="455" r="3.6" fill="none" stroke="#ffbf7f" stroke-width="0.9"/>
<path d="M547.2 455H558.2M552.7 450V460" fill="none" stroke="#ff0000" stroke-width="1.3"/>
<circle cx="583.3" cy="455" r="3.6" fill="none" stroke="#ffbf7f" stroke-width="0.9"/>
<path d="M577.8 455H588.8M583.3 450V460" fill="none" stroke="#ff0000" stroke-width="1.3"/>
<circle cx="615" cy="455" r="3.6" fill="none" stroke="#ffbf7f" stroke-width="0.9"/>
<path d="M609.5 455H620.5M615 450V460" fill="none" stroke="#ff0000" stroke-width="1.3"/>
<path d="M519.3 459.3V470M522.7 459.3V470" fill="none" stroke="#00ffff" stroke-width="1.0"/>
<path d="M518.5 470.6H523.5" fill="none" stroke="#ffffff" stroke-width="1.0"/>
<path d="M543.3 459.3V470M546 459.3V470" fill="none" stroke="#00ffff" stroke-width="1.0"/>
<path d="M542.5 470.6H546.8" fill="none" stroke="#ffffff" stroke-width="1.0"/>
<path d="M566.7 459.3V470M570 459.3V470" fill="none" stroke="#00ffff" stroke-width="1.0"/>
<path d="M565.9000000000001 470.6H570.8" fill="none" stroke="#ffffff" stroke-width="1.0"/>
<path d="M591.7 459.3V470M594.3 459.3V470" fill="none" stroke="#00ffff" stroke-width="1.0"/>
<path d="M590.9000000000001 470.6H595.0999999999999" fill="none" stroke="#ffffff" stroke-width="1.0"/>
<path d="M615 459.3V470M618.3 459.3V470" fill="none" stroke="#00ffff" stroke-width="1.0"/>
<path d="M614.2 470.6H619.0999999999999" fill="none" stroke="#ffffff" stroke-width="1.0"/>
<path d="M624 446H628.3V463.3H624M624 452H628.3M624 457H628.3" fill="none" stroke="#ffbf7f" stroke-width="1.0"/>
<rect x="626.0" y="448.0" width="3.0" height="3.0" fill="#ffbf7f"/>
<rect x="626.0" y="458.5" width="3.0" height="3.0" fill="#ffbf7f"/>
<rect x="557.3" y="465.0" width="7.7" height="3.3" fill="#ffffff"/>
<path d="M565 468L569.3 470.7" fill="none" stroke="#ffffff" stroke-width="0.7"/>
<rect x="565.0" y="478.3" width="8.3" height="4.9" fill="#ffffff"/>
<path d="M565 483.5H580" fill="none" stroke="#ffffff" stroke-width="1.1"/>
<path d="M688.8 344V404M696 344V404M688.8 404H696" fill="none" stroke="#00ffff" stroke-width="1.2"/>
<path d="M692.5 360V406.7" fill="none" stroke="#ff0000" stroke-width="1.1"/>
<path d="M676.8 358H697.3M676.8 358V362H688.8" fill="none" stroke="#00ffff" stroke-width="1.2"/>
<rect x="672.5" y="352.0" width="6.2" height="3.5" fill="#ffffff"/>
<path d="M678.7 355.5L682.7 358" fill="none" stroke="#ffffff" stroke-width="0.7"/>
<path d="M696 356H705.3V373.3H696M699 356V353H702V356" fill="none" stroke="#ffbf7f" stroke-width="1.0"/>
<rect x="703.8" y="362.0" width="2.2" height="4.0" fill="#ffbf7f"/>
<rect x="704.0" y="355.0" width="2.0" height="2.0" fill="#ff0000"/>
<rect x="704.0" y="372.4" width="2.0" height="1.8" fill="#ff0000"/>
<path d="M684 372H702.7L701 378.7H686Z" fill="none" stroke="#ffbf7f" stroke-width="1.0"/>
<path d="M686.5 374.5l1.5 3M689.5 374.5l1.5 3M692.5 374.5l1.5 3M695.5 374.5l1.5 3M698.5 374.5l1.5 3" fill="none" stroke="#ffbf7f" stroke-width="0.8"/>
<path d="M688 372.6H697.3" fill="none" stroke="#00ff00" stroke-width="1.4"/>
<rect x="684.0" y="377.8" width="2.0" height="1.6" fill="#ff0000"/>
<rect x="701.0" y="377.8" width="2.0" height="1.6" fill="#ff0000"/>
<path d="M688.8 390.5C691 388 692 393 694 391S696 389 696 392" fill="none" stroke="#00ffff" stroke-width="0.9"/>
<rect x="699.2" y="394.0" width="12.8" height="2.6" fill="#ffffff"/>
<path d="M697 397.6H712.6" fill="none" stroke="#ffffff" stroke-width="0.8"/>
<rect x="688.8" y="411.5" width="7.2" height="2.5" fill="#ffffff"/>
<rect x="688.0" y="415.4" width="16.0" height="1.4" fill="#ffffff"/>
<path d="M688 330.7H697.3V344H688Z" fill="none" stroke="#00ffff" stroke-width="1.2"/>
<path d="M684.5 331V343.5M701 331V343.5M687 327.5H699M686 345.3H700" fill="none" stroke="#ffbf7f" stroke-width="1.1"/>
<rect x="683.0" y="330.2" width="2.0" height="1.6" fill="#ffbf7f"/>
<rect x="700.5" y="330.2" width="2.0" height="1.6" fill="#ffbf7f"/>
<rect x="683.0" y="334.2" width="2.0" height="1.6" fill="#ffbf7f"/>
<rect x="700.5" y="334.2" width="2.0" height="1.6" fill="#ffbf7f"/>
<rect x="683.0" y="338.2" width="2.0" height="1.6" fill="#ffbf7f"/>
<rect x="700.5" y="338.2" width="2.0" height="1.6" fill="#ffbf7f"/>
<rect x="683.0" y="342.2" width="2.0" height="1.6" fill="#ffbf7f"/>
<rect x="700.5" y="342.2" width="2.0" height="1.6" fill="#ffbf7f"/>
<rect x="687.2" y="326.0" width="2.0" height="2.4" fill="#ffbf7f"/>
<rect x="691.2" y="326.0" width="2.0" height="2.4" fill="#ffbf7f"/>
<rect x="695.2" y="326.0" width="2.0" height="2.4" fill="#ffbf7f"/>
<rect x="697.0" y="326.0" width="2.5" height="4.0" fill="#ffbf7f"/>
<path d="M690 334H695.5M695.5 331V338" fill="none" stroke="#ffffff" stroke-width="0.8"/>
<rect x="671.5" y="324.0" width="16.5" height="1.2" fill="#ffffff"/>
<rect x="671.5" y="326.4" width="14.5" height="1.1" fill="#ffffff"/>
<path d="M688 325L693.3 334.7" fill="none" stroke="#ffffff" stroke-width="0.7"/>
<rect x="662.0" y="377.3" width="14.0" height="1.3" fill="#ffffff"/>
<rect x="662.0" y="380.0" width="14.0" height="1.3" fill="#ffffff"/>
<path d="M676 380.6L684.8 372.5" fill="none" stroke="#ffffff" stroke-width="0.7"/>
<path d="M727.8 344V404M735 344V404M727.8 404H735" fill="none" stroke="#00ffff" stroke-width="1.2"/>
<path d="M731.5 360V406.7" fill="none" stroke="#ff0000" stroke-width="1.1"/>
<path d="M715.8 358H736.3M715.8 358V362H727.8" fill="none" stroke="#00ffff" stroke-width="1.2"/>
<rect x="711.5" y="352.0" width="6.2" height="3.5" fill="#ffffff"/>
<path d="M717.7 355.5L721.7 358" fill="none" stroke="#ffffff" stroke-width="0.7"/>
<path d="M735 356H744.3V373.3H735M738 356V353H741V356" fill="none" stroke="#ffbf7f" stroke-width="1.0"/>
<rect x="742.8" y="362.0" width="2.2" height="4.0" fill="#ffbf7f"/>
<rect x="743.0" y="355.0" width="2.0" height="2.0" fill="#ff0000"/>
<rect x="743.0" y="372.4" width="2.0" height="1.8" fill="#ff0000"/>
<path d="M723 372H741.7L740 378.7H725Z" fill="none" stroke="#ffbf7f" stroke-width="1.0"/>
<path d="M725.5 374.5l1.5 3M728.5 374.5l1.5 3M731.5 374.5l1.5 3M734.5 374.5l1.5 3M737.5 374.5l1.5 3" fill="none" stroke="#ffbf7f" stroke-width="0.8"/>
<path d="M727 372.6H736.3" fill="none" stroke="#00ff00" stroke-width="1.4"/>
<rect x="723.0" y="377.8" width="2.0" height="1.6" fill="#ff0000"/>
<rect x="740.0" y="377.8" width="2.0" height="1.6" fill="#ff0000"/>
<path d="M727.8 390.5C730 388 731 393 733 391S735 389 735 392" fill="none" stroke="#00ffff" stroke-width="0.9"/>
<rect x="738.2" y="394.0" width="12.8" height="2.6" fill="#ffffff"/>
<path d="M736 397.6H751.6" fill="none" stroke="#ffffff" stroke-width="0.8"/>
<rect x="727.8" y="411.5" width="7.2" height="2.5" fill="#ffffff"/>
<rect x="727.0" y="415.4" width="16.0" height="1.4" fill="#ffffff"/>
<path d="M740 329.3V344H727.5M727.5 333H732V339.5H727.5M727.5 344V339.5" fill="none" stroke="#00ffff" stroke-width="1.2"/>
<path d="M735.5 329.3V357.3M733.3 329.3H740.8" fill="none" stroke="#00ff00" stroke-width="1.3"/>
<path d="M723.5 334V343.5M726 345.3H741M741.8 331V343" fill="none" stroke="#ffbf7f" stroke-width="1.1"/>
<rect x="722.0" y="333.2" width="2.0" height="1.6" fill="#ffbf7f"/>
<rect x="722.0" y="337.2" width="2.0" height="1.6" fill="#ffbf7f"/>
<rect x="722.0" y="341.2" width="2.0" height="1.6" fill="#ffbf7f"/>
<rect x="727.0" y="326.0" width="2.0" height="3.0" fill="#ffbf7f"/>
<rect x="731.0" y="326.4" width="2.0" height="2.6" fill="#ffbf7f"/>
<rect x="724.0" y="331.0" width="3.0" height="2.0" fill="#ffbf7f"/>
<rect x="727.5" y="325.4" width="1.5" height="1.6" fill="#ff0000"/>
<rect x="693.7" y="476.2" width="4.3" height="2.6" fill="#ffffff"/>
<rect x="698.0" y="481.9" width="83.2" height="3.1" fill="#ffffff"/>
<rect x="698.0" y="486.3" width="93.2" height="3.5" fill="#ffffff"/>
<rect x="698.0" y="490.6" width="40.7" height="3.1" fill="#ffffff"/>
<g filter="url(#glow)" opacity="0.6">
<rect x="487.0" y="507.0" width="55.0" height="9.0" fill="#dfe8ff"/>
<rect x="681.0" y="507.0" width="47.0" height="9.0" fill="#dfe8ff"/>
</g>
<circle cx="481" cy="512" r="4" fill="#dfe8ff"/>
<rect x="487.0" y="507.0" width="55.0" height="9.0" fill="#dfe8ff"/>
<path d="M489 511.6H540" fill="none" stroke="#56648a" stroke-width="1.2"/>
<rect x="544.0" y="507.4" width="11.0" height="3.2" fill="#dfe8ff"/>
<rect x="544.0" y="512.6" width="11.0" height="3.2" fill="#dfe8ff"/>
<path d="M557 505.5V518.5 M565 505.5V518.5 M573 505.5V518.5 M581 505.5V518.5 M589 505.5V518.5 M597 505.5V518.5 M605 505.5V518.5 M613 505.5V518.5 M621 505.5V518.5 M629 505.5V518.5 M637 505.5V518.5 M645 505.5V518.5 M653 505.5V518.5 M661 505.5V518.5 M669 505.5V518.5 M679 505.5V518.5 M557 512H679" fill="none" stroke="#ffffff" stroke-width="0.9"/>
<rect x="558.5" y="507.2" width="5.5" height="3.4" fill="#dfe8ff"/>
<rect x="558.5" y="513.4" width="5.5" height="3.2" fill="#dfe8ff"/>
<rect x="574.5" y="507.2" width="5.5" height="3.4" fill="#dfe8ff"/>
<rect x="574.5" y="513.4" width="5.5" height="3.2" fill="#dfe8ff"/>
<rect x="590.5" y="507.2" width="5.5" height="3.4" fill="#dfe8ff"/>
<rect x="590.5" y="513.4" width="5.5" height="3.2" fill="#dfe8ff"/>
<rect x="606.5" y="507.2" width="5.5" height="3.4" fill="#dfe8ff"/>
<rect x="606.5" y="513.4" width="5.5" height="3.2" fill="#dfe8ff"/>
<rect x="622.5" y="507.2" width="5.5" height="3.4" fill="#dfe8ff"/>
<rect x="622.5" y="513.4" width="5.5" height="3.2" fill="#dfe8ff"/>
<rect x="638.5" y="507.2" width="5.5" height="3.4" fill="#dfe8ff"/>
<rect x="638.5" y="513.4" width="5.5" height="3.2" fill="#dfe8ff"/>
<rect x="654.5" y="507.2" width="5.5" height="3.4" fill="#dfe8ff"/>
<rect x="654.5" y="513.4" width="5.5" height="3.2" fill="#dfe8ff"/>
<rect x="670.5" y="507.2" width="5.5" height="3.4" fill="#dfe8ff"/>
<rect x="670.5" y="513.4" width="5.5" height="3.2" fill="#dfe8ff"/>
<rect x="681.0" y="507.0" width="47.0" height="9.0" fill="#dfe8ff"/>
<path d="M683 511.6H726" fill="none" stroke="#56648a" stroke-width="1.2"/>
<path d="M730 505.5V518.5M734 505.5V518.5M770 505.5V518.5M780 505.5V518.5M770 512H792" fill="none" stroke="#ffffff" stroke-width="0.9"/>
<rect x="731.0" y="507.4" width="2.0" height="2.2" fill="#ffffff"/>
<rect x="731.0" y="513.4" width="2.0" height="2.2" fill="#ffffff"/>
<path d="M742 511.8H762" fill="none" stroke="#ffffff" stroke-width="1.6"/>
<rect x="771.5" y="507.2" width="7.0" height="3.2" fill="#dfe8ff"/>
<rect x="781.5" y="513.4" width="9.0" height="3.2" fill="#dfe8ff"/>
</svg>

<svg id="xic" class="abs" viewBox="0 0 15 15"><path d="M1 1L14 14M14 1L1 14" stroke="#e8e8e8" stroke-width="1.3" fill="none"/></svg>
<div id="strip" class="abs"><i style="left:2px;width:110px"></i><i style="left:567px;width:36px"></i><i style="left:605px;width:82px"></i><i style="left:689px;width:105px"></i></div>
<svg id="wm2" class="abs" viewBox="0 0 140 30"><text transform="translate(1.6,24.6) scale(0.58,1)" x="-2.3 14.7 31.8 53.9 70.0 86.2 103.2 121.1 137.3 156.1 172.2 188.4 201.3" y="0" font-family="Liberation Serif, serif" font-size="30" fill="#8c8f93">www.cndao.com</text></svg>
</body>
</html>
